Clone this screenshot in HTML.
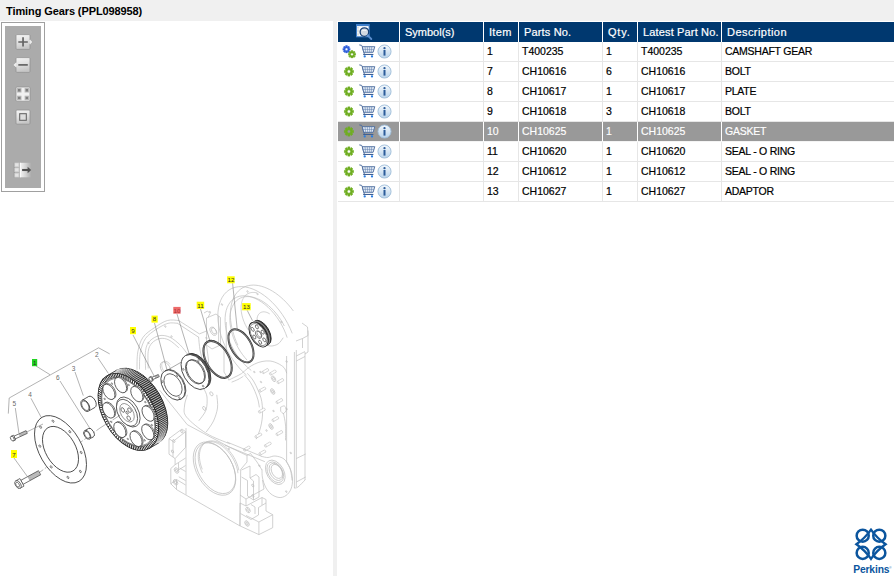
<!DOCTYPE html>
<html lang="en"><head><meta charset="utf-8"><title>Timing Gears (PPL098958)</title>
<style>
*{box-sizing:border-box}
html,body{margin:0;padding:0}
body{width:894px;height:576px;overflow:hidden;background:#f0f0f0;font-family:"Liberation Sans",sans-serif;position:relative;color:#000}
#title{position:absolute;left:6px;top:4px;height:14px;line-height:14px;font-size:11px;font-weight:bold;letter-spacing:-0.1px;white-space:nowrap;color:#000}
#left{position:absolute;left:0;top:21px;width:333px;height:555px;background:#fff;overflow:hidden}
#split{position:absolute;left:333px;top:21px;width:4px;height:555px;background:#f0f0f0}
#right{position:absolute;left:337px;top:21px;width:557px;height:555px;background:#fff;overflow:hidden}
#parts{position:absolute;left:1px;top:1px;width:556px;border-collapse:separate;border-spacing:0;table-layout:fixed;font-size:10.5px}
#parts th{background:#00386f;color:#fff;font-weight:normal;font-size:11px;text-align:left;height:20px;padding:0 0 1px 5px;border-right:1px solid #fff;white-space:nowrap;overflow:hidden}
#parts th:last-child{border-right:0}
#parts td{height:20px;padding:0 0 1px 3px;border-right:1px solid #e6e6e6;border-bottom:1px solid #e6e6e6;white-space:nowrap;overflow:hidden;color:#000;letter-spacing:0}
#parts td:last-child{border-right:0}
#parts .c0{width:62px}#parts .c1{width:84px}#parts .c2{width:35px}#parts .c3{width:84px}#parts .c4{width:35px}#parts .c5{width:84px}
#parts th.c0{padding:0;text-align:center}
#parts th.c0 svg{display:block;margin:1px 0 0 18px}
#parts td.c0{padding:0;position:relative}
#parts td.c6{letter-spacing:-0.25px}
#parts tr.sel td{background:#999;color:#fff;border-right-color:#fff;border-bottom-color:#f4f4f4}
.ic{position:absolute;top:2px}
.ic.g1{left:4px;top:2.500px}.ic.g2{left:3.900px;top:2.600px}
.ic.cart{left:20.500px;top:1.500px}
.ic.info{left:39.100px;top:1.500px}
#tb{position:absolute;left:1px;top:1px;width:44px;height:170px;border:1px solid #a0a0a0;background:#fff}
#tb .in{position:absolute;left:3px;top:3px;width:36px;height:162px;background:#ababab}
#tb svg{position:absolute;left:0;top:0}
#logo{position:absolute;left:513px;top:504px}
#diagram{position:absolute;left:0;top:0}

#parts th.c2{letter-spacing:0.3px}#parts th.c3{letter-spacing:0.15px}#parts th.c4{letter-spacing:0.8px}#parts th.c5{letter-spacing:0.15px}#parts th.c6{letter-spacing:0.45px}

#parts td{-webkit-text-stroke:0.2px #000}#parts tr.sel td{-webkit-text-stroke:0.15px #fff}#parts th{-webkit-text-stroke:0.2px #fff}

</style></head>
<body>
<svg width="0" height="0" style="position:absolute">
<defs>
<linearGradient id="ig" x1="0" y1="0" x2="0" y2="1"><stop offset="0" stop-color="#f4f9fd"/><stop offset="1" stop-color="#b9d3ea"/></linearGradient>
<symbol id="gear" viewBox="-10.500 -10.500 21 21">
<path fill="currentColor" stroke="currentColor" stroke-width="1.2" stroke-linejoin="round" fill-rule="evenodd" d="M6.69,-2.05 L9.35,-2.16 L9.35,2.16 L6.69,2.05 L6.18,3.29 L8.14,5.09 L5.09,8.14 L3.29,6.18 L2.05,6.69 L2.16,9.35 L-2.16,9.35 L-2.05,6.69 L-3.29,6.18 L-5.09,8.14 L-8.14,5.09 L-6.18,3.29 L-6.69,2.05 L-9.35,2.16 L-9.35,-2.16 L-6.69,-2.05 L-6.18,-3.29 L-8.14,-5.09 L-5.09,-8.14 L-3.29,-6.18 L-2.05,-6.69 L-2.16,-9.35 L2.16,-9.35 L2.05,-6.69 L3.29,-6.18 L5.09,-8.14 L8.14,-5.09 L6.18,-3.29 Z M0,-3.40 A3.40,3.40 0 1 0 0.01,-3.40 Z"/>
</symbol>
<symbol id="cart" viewBox="0 0 17 14">
<path d="M0.300,0.900 L2.300,1.300 Q3,1.500 3.200,2.300 L5.400,10.400 H13.600" fill="none" stroke="#4a6a9c" stroke-width="1"/>
<path d="M3.200,2.700 H15.800 L14.100,8.300 H4.800 Z" fill="#e4ecf6" stroke="#4a6a9c" stroke-width="0.900"/>
<path d="M6,2.700 L6.700,8.300 M8.300,2.700 L8.700,8.300 M10.600,2.700 L10.600,8.300 M12.700,2.700 L12.300,8.300 M4,5.400 H14.900" stroke="#5f7fae" stroke-width="0.550" fill="none"/>
<path d="M4.200,10.500 H14.400" fill="none" stroke="#3f5f92" stroke-width="1"/>
<circle cx="5.700" cy="12.400" r="1.150" fill="#2b7de0"/><circle cx="13" cy="12.400" r="1.150" fill="#2b7de0"/>
</symbol>
<symbol id="info" viewBox="0 0 15 15">
<circle cx="7.5" cy="7.5" r="6.55" fill="url(#ig)" stroke="#9dbcd8" stroke-width="0.9"/>
<circle cx="7.5" cy="4.2" r="1.15" fill="#2c5c9a"/>
<rect x="6.5" y="6" width="2" height="5.6" fill="#2c5c9a"/>
</symbol>
<symbol id="search" viewBox="0 0 17 17">
<rect x="0.500" y="0.500" width="12.600" height="12.300" fill="#fdfdfd" stroke="#3f7fca" stroke-width="1"/>
<rect x="0.200" y="0.100" width="13.200" height="2" fill="#3f7fca"/>
<path d="M2,3.200 V12" stroke="#9aa" stroke-width="1" stroke-dasharray="0.700 0.700"/>
<circle cx="8.400" cy="8.100" r="4.300" fill="#d3d9e1" stroke="#163f75" stroke-width="1.300"/>
<path d="M6.200,6.900 Q8.400,5.600 10.600,6.900" stroke="#f4f6f8" stroke-width="1.100" fill="none"/>
<path d="M11.700,11.400 L15.300,15" stroke="#5b8fd0" stroke-width="1.900" stroke-linecap="round"/>
</symbol>
</defs></svg>

<div id="title">Timing Gears (PPL098958)</div>
<div id="left">
<div id="tb"><div class="in"></div>
<svg width="42" height="168" viewBox="2 23 42 168">
<defs>
<linearGradient id="bg" x1="0" y1="0" x2="0.25" y2="1"><stop offset="0" stop-color="#f6f6f6"/><stop offset="0.5" stop-color="#e2e2e2"/><stop offset="1" stop-color="#c6c6c6"/></linearGradient>
<linearGradient id="fade" x1="0" y1="0" x2="1" y2="0"><stop offset="0" stop-color="#f4f4f4"/><stop offset="0.5" stop-color="#d4d4d4"/><stop offset="1" stop-color="#ababab"/></linearGradient>
</defs>
<path d="M17,34.600 H29 Q30,34.600 30,35.600 V39.600 L32.300,42 L30,44.400 V48.400 Q30,49.400 29,49.400 H17 Q16,49.400 16,48.400 V35.600 Q16,34.600 17,34.600 Z" fill="url(#bg)" stroke="#929292" stroke-width="0.800"/>
<path d="M30,39.600 L32.300,42 L30,44.400 Z" fill="#ececec"/>
<path d="M18.300,42 H27.800 M23.050,37.300 V46.600" stroke="#646464" stroke-width="1.700"/>
<path d="M17,57.600 H29 Q30,57.600 30,58.600 V71.400 Q30,72.400 29,72.400 H17 Q16,72.400 16,71.400 V67.300 L13.400,65 L16,62.600 V58.600 Q16,57.600 17,57.600 Z" fill="url(#bg)" stroke="#929292" stroke-width="0.800"/>
<path d="M16,62.600 L13.400,65 L16,67.300 Z" fill="#ececec"/>
<path d="M18.300,64.900 H27.800" stroke="#646464" stroke-width="1.700"/>
<rect x="16" y="87" width="14" height="14.200" rx="1" fill="#f1f1f1" stroke="#929292" stroke-width="0.800"/>
<g fill="#808080" stroke="#b9b9b9" stroke-width="1">
<rect x="17.500" y="88.500" width="3.500" height="3.500"/><rect x="25.100" y="88.500" width="3.500" height="3.500"/>
<rect x="17.500" y="96.200" width="3.500" height="3.500"/><rect x="25.100" y="96.200" width="3.500" height="3.500"/>
</g>
<rect x="16" y="110" width="14" height="14.200" rx="1" fill="url(#bg)" stroke="#929292" stroke-width="0.800"/>
<rect x="19.700" y="113.700" width="6.600" height="6.600" fill="#dedede" stroke="#626262" stroke-width="1.050"/>
<rect x="20" y="162.800" width="11.300" height="14.500" fill="url(#fade)"/>
<path d="M20.300,162.800 V177.300" stroke="#fff" stroke-width="0.800"/>
<path d="M14.300,162.800 V177.300" stroke="#8c8c8c" stroke-width="0.800"/>
<g fill="#e4e4e4" stroke="#cdcdcd" stroke-width="0.700">
<rect x="14.800" y="163" width="4.100" height="3.800"/><rect x="14.800" y="168" width="4.100" height="3.800"/><rect x="14.800" y="173.200" width="4.100" height="3.800"/>
</g>
<path d="M22.100,170 H28.500" stroke="#525252" stroke-width="2.100"/>
<path d="M27.600,166.700 L31.200,170 L27.600,173.300 Z" fill="#525252"/>
</svg></div>

<svg id="diagram" width="333" height="555" viewBox="0 21 333 555" font-family="Liberation Sans, sans-serif">
<polyline points="293.37,310.98 291.05,307.93 288.62,305.02 286.1,302.26 283.5,299.67 280.83,297.25 278.11,295.03 275.35,293.01 272.56,291.2 269.76,289.61 266.96,288.25 264.17,287.13 261.42,286.25 258.7,285.61 256.05,285.23 253.46,285.09 250.96,285.21 248.55,285.58 246.24,286.19 244.06,287.06 242.01,288.16 240.09,289.51 238.33,291.08 236.72,292.87 235.28,294.88 234.01,297.09 232.92,299.49 232.02,302.07 231.31,304.82 230.79,307.72 230.47,310.76 230.34,313.92 230.41,317.19 230.68,320.56 231.15,323.99 231.81,327.49 232.66,331.02 233.7,334.58 234.92,338.14 236.31,341.69 237.87,345.21" fill="none" stroke="#bdbdbd" stroke-width="0.7"/>
<polyline points="292.22,333.39 290.18,328.48 287.82,323.65 285.16,318.95 282.24,314.42 279.09,310.12 275.72,306.07 272.18,302.31 268.5,298.89 264.71,295.84 260.85,293.19 256.97,290.96 253.08,289.17 249.24,287.84 245.48,286.98 241.83,286.61 238.33,286.72 235.02,287.32 231.93,288.39 229.08,289.93 226.5,291.93 224.23,294.36 222.27,297.2 220.66,300.42 219.39,304 218.5,307.89 217.98,312.07 217.84,316.48 218.09,321.09 218.71,325.86 219.71,330.73 221.07,335.66 222.78,340.61 224.82,345.52 227.18,350.35 229.84,355.05 232.76,359.58 235.91,363.88 239.28,367.93 242.82,371.69 246.5,375.11" fill="none" stroke="#bdbdbd" stroke-width="0.7"/>
<polyline points="287.17,337.64 285.67,333.42 283.87,329.23 281.79,325.13 279.47,321.15 276.91,317.33 274.14,313.72 271.2,310.36 268.12,307.28 264.92,304.51 261.65,302.08 258.34,300.02 255.01,298.34 251.71,297.07 248.48,296.23 245.33,295.8 242.32,295.82 239.46,296.26 236.79,297.14 234.35,298.43 232.14,300.12 230.2,302.21 228.55,304.66 227.2,307.45 226.17,310.55 225.47,313.93 225.11,317.55 225.08,321.37 225.4,325.36 226.05,329.47 227.04,333.66 228.34,337.89 229.95,342.1 231.85,346.26 234.02,350.33 236.44,354.25 239.07,358 241.9,361.52 244.9,364.79 248.02,367.76 251.25,370.41" fill="none" stroke="#bdbdbd" stroke-width="0.7"/>
<polyline points="284.35,326.01 282.54,322.67 280.55,319.44 278.4,316.33 276.1,313.38 273.68,310.6 271.16,308.03 268.55,305.67 265.88,303.55 263.16,301.69 260.42,300.1 257.68,298.79 254.97,297.77 252.3,297.06 249.69,296.65 247.17,296.55 244.76,296.77 242.48,297.29 240.33,298.12 238.35,299.25 236.55,300.67 234.94,302.37 233.53,304.33 232.34,306.54 231.37,308.99 230.64,311.64 230.14,314.49 229.89,317.5 229.88,320.66 230.12,323.94 230.6,327.31 231.32,330.74 232.27,334.21 233.45,337.7 234.84,341.16 236.44,344.58 238.23,347.93 240.2,351.18 242.33,354.3 244.61,357.27 247.02,360.07" fill="none" stroke="#bdbdbd" stroke-width="0.7"/>
<polyline points="256.98,292.9 255.88,292.66 254.8,292.51 253.74,292.43 252.7,292.43 251.7,292.51 250.72,292.67 249.78,292.91 248.87,293.22 248,293.61 247.17,294.08 246.39,294.62 245.66,295.24 244.97,295.92 244.33,296.67 243.75,297.49 243.22,298.38 242.75,299.32 242.33,300.32 241.97,301.38 241.67,302.49 241.44,303.65 241.26,304.86 241.14,306.11 241.09,307.39 241.1,308.71 241.17,310.07 241.31,311.44 241.5,312.84 241.76,314.26 242.07,315.69 242.45,317.14 242.88,318.59 243.37,320.03 243.92,321.48 244.52,322.92 245.17,324.35 245.87,325.76 246.62,327.15 247.41,328.52 248.25,329.86" fill="none" stroke="#bdbdbd" stroke-width="0.7"/>
<polyline points="269.73,313.92 268.87,313.39 268.02,312.94 267.16,312.56 266.32,312.26 265.49,312.04 264.67,311.9 263.87,311.84 263.1,311.86 262.36,311.96 261.65,312.14 260.98,312.39 260.36,312.73 259.77,313.14 259.24,313.63 258.75,314.18 258.32,314.81 257.95,315.49 257.63,316.24 257.37,317.05 257.18,317.9 257.04,318.81 256.97,319.75 256.97,320.74 257.02,321.75 257.14,322.79 257.32,323.85 257.57,324.93 257.87,326.02 258.23,327.1 258.65,328.19 259.12,329.26 259.65,330.32 260.22,331.36 260.84,332.37 261.5,333.35 262.2,334.29 262.93,335.19 263.7,336.04 264.49,336.84 265.3,337.59" fill="none" stroke="#bdbdbd" stroke-width="0.7"/>
<path d="M262.0,342.5 C263.3,343.1 267.3,345.8 270.0,346.0 C272.7,346.2 275.8,345.3 278.0,344.0 C280.2,342.7 282.2,339.0 283.0,338.0" fill="none" stroke="#bdbdbd" stroke-width="0.7" stroke-linejoin="round" stroke-linecap="round" />
<ellipse cx="222" cy="304.5" rx="0.9" ry="0.54" transform="rotate(60 222 304.5)" fill="none" stroke="#bdbdbd" stroke-width="0.7" />
<ellipse cx="247.5" cy="291.5" rx="0.9" ry="0.54" transform="rotate(60 247.5 291.5)" fill="none" stroke="#bdbdbd" stroke-width="0.7" />
<ellipse cx="257.5" cy="294" rx="0.9" ry="0.54" transform="rotate(60 257.5 294)" fill="none" stroke="#bdbdbd" stroke-width="0.7" />
<ellipse cx="281.5" cy="322" rx="0.9" ry="0.54" transform="rotate(60 281.5 322)" fill="none" stroke="#bdbdbd" stroke-width="0.7" />
<ellipse cx="286.6" cy="361.5" rx="0.9" ry="0.54" transform="rotate(60 286.6 361.5)" fill="none" stroke="#bdbdbd" stroke-width="0.7" />
<ellipse cx="286.6" cy="409" rx="0.9" ry="0.54" transform="rotate(60 286.6 409)" fill="none" stroke="#bdbdbd" stroke-width="0.7" />
<ellipse cx="290.8" cy="453" rx="0.9" ry="0.54" transform="rotate(60 290.8 453)" fill="none" stroke="#bdbdbd" stroke-width="0.7" />
<polyline points="218.6,316 218.6,345.5" fill="none" stroke="#bdbdbd" stroke-width="0.7" stroke-linejoin="round" />
<polyline points="226.3,322 226.3,351" fill="none" stroke="#bdbdbd" stroke-width="0.7" stroke-linejoin="round" />
<polyline points="286.6,356 286.6,462" fill="none" stroke="#bdbdbd" stroke-width="0.7" stroke-linejoin="round" />
<polyline points="294.4,352 294.4,488" fill="none" stroke="#bdbdbd" stroke-width="0.7" stroke-linejoin="round" />
<polyline points="296.3,350 296.3,487" fill="none" stroke="#bdbdbd" stroke-width="0.7" stroke-linejoin="round" />
<polyline points="305,352 305,480" fill="none" stroke="#bdbdbd" stroke-width="0.7" stroke-linejoin="round" />
<polyline points="308,330.5 308,352 305,354" fill="none" stroke="#bdbdbd" stroke-width="0.7" stroke-linejoin="round" />
<polyline points="296.3,356 305,351.5" fill="none" stroke="#bdbdbd" stroke-width="0.7" stroke-linejoin="round" />
<polyline points="296.3,361 305,356.5" fill="none" stroke="#bdbdbd" stroke-width="0.7" stroke-linejoin="round" />
<path d="M294.4,488.0 C295.0,487.8 296.2,488.3 298.0,487.0 C299.8,485.7 303.8,481.2 305.0,480.0" fill="none" stroke="#bdbdbd" stroke-width="0.7" stroke-linejoin="round" stroke-linecap="round" />
<polyline points="296.3,458.5 305.7,454" fill="none" stroke="#bdbdbd" stroke-width="0.7" stroke-linejoin="round" />
<polyline points="296.3,482 305.7,477" fill="none" stroke="#bdbdbd" stroke-width="0.7" stroke-linejoin="round" />
<polyline points="302,323 307.5,327 308,335.5 302.5,338.5" fill="none" stroke="#bdbdbd" stroke-width="0.7" stroke-linejoin="round" />
<polyline points="296,341 302.5,338.5 302.5,348" fill="none" stroke="#bdbdbd" stroke-width="0.7" stroke-linejoin="round" />
<polygon points="206.5,318 216,314 220.5,317.5 220.5,345 212,349 206.5,345" fill="none" stroke="#bdbdbd" stroke-width="0.7" stroke-linejoin="round" />
<ellipse cx="213.3" cy="331.2" rx="4.6" ry="2.76" transform="rotate(60 213.3 331.2)" fill="none" stroke="#bdbdbd" stroke-width="0.7" />
<ellipse cx="213.9" cy="330.8" rx="3.4" ry="2.04" transform="rotate(60 213.9 330.8)" fill="none" stroke="#bdbdbd" stroke-width="0.7" />
<polyline points="204,313 207.5,311 210,313.5 208,317.5" fill="none" stroke="#bdbdbd" stroke-width="0.7" stroke-linejoin="round" />
<ellipse cx="206.4" cy="338" rx="0.9" ry="0.54" transform="rotate(60 206.4 338)" fill="none" stroke="#bdbdbd" stroke-width="0.7" />
<ellipse cx="210" cy="312" rx="0.8" ry="0.48" transform="rotate(60 210 312)" fill="none" stroke="#bdbdbd" stroke-width="0.7" />
<path d="M137.0,369.4 C137.1,366.5 136.8,357.4 137.8,352.0 C138.8,346.6 140.2,341.3 143.0,337.3 C145.8,333.3 150.2,330.6 154.3,327.8 C158.4,325.0 163.2,321.7 167.3,320.5 C171.4,319.3 176.7,320.5 178.6,320.5" fill="none" stroke="#bdbdbd" stroke-width="0.7" stroke-linejoin="round" stroke-linecap="round" />
<polyline points="178.6,320.5 187.3,326 199.4,333.9 206.5,331" fill="none" stroke="#bdbdbd" stroke-width="0.7" stroke-linejoin="round" />
<path d="M139.5,369.0 C139.6,366.2 139.3,357.6 140.3,352.5 C141.3,347.4 142.9,342.3 145.5,338.5 C148.1,334.7 152.2,332.0 156.0,329.5 C159.8,327.0 164.4,324.3 168.0,323.3 C171.6,322.3 175.9,323.3 177.5,323.3" fill="none" stroke="#bdbdbd" stroke-width="0.7" stroke-linejoin="round" stroke-linecap="round" />
<polyline points="177.5,323.3 198.6,337.2" fill="none" stroke="#bdbdbd" stroke-width="0.7" stroke-linejoin="round" />
<path d="M145.6,369.4 C145.6,366.2 144.9,355.1 145.6,350.3 C146.3,345.5 147.7,343.2 150.0,340.8 C152.3,338.4 156.2,336.2 159.5,335.6 C162.8,335.0 166.5,335.7 170.0,337.3 C173.5,338.9 177.4,342.4 180.3,345.1 C183.2,347.9 186.1,352.4 187.3,353.8" fill="none" stroke="#bdbdbd" stroke-width="0.7" stroke-linejoin="round" stroke-linecap="round" />
<path d="M148.2,368.0 C148.2,365.2 147.6,355.7 148.2,351.5 C148.8,347.3 150.0,345.2 152.0,343.0 C154.0,340.8 157.2,339.0 160.0,338.5 C162.8,338.0 165.9,338.5 169.0,340.0 C172.1,341.5 176.9,346.2 178.5,347.5" fill="none" stroke="#bdbdbd" stroke-width="0.7" stroke-linejoin="round" stroke-linecap="round" />
<ellipse cx="148.5" cy="343" rx="0.9" ry="0.54" transform="rotate(60 148.5 343)" fill="none" stroke="#bdbdbd" stroke-width="0.7" />
<ellipse cx="165.3" cy="326.5" rx="0.9" ry="0.54" transform="rotate(60 165.3 326.5)" fill="none" stroke="#bdbdbd" stroke-width="0.7" />
<ellipse cx="171.5" cy="336.5" rx="0.9" ry="0.54" transform="rotate(60 171.5 336.5)" fill="none" stroke="#bdbdbd" stroke-width="0.7" />
<ellipse cx="165.5" cy="368.5" rx="7.2" ry="4.46" transform="rotate(60 165.5 368.5)" fill="none" stroke="#bdbdbd" stroke-width="0.7" />
<polyline points="170.18,364.52 169.82,364.05 169.44,363.61 169.05,363.2 168.64,362.82 168.21,362.48 167.78,362.17 167.35,361.9 166.91,361.67 166.47,361.49 166.04,361.34 165.61,361.24 165.2,361.19 164.79,361.18 164.4,361.22 164.03,361.3 163.68,361.42 163.35,361.59 163.05,361.81 162.77,362.06 162.52,362.35 162.31,362.69 162.12,363.05 161.97,363.45 161.85,363.88 161.77,364.33 161.73,364.81 161.72,365.31 161.75,365.83 161.81,366.36 161.91,366.9 162.04,367.45 162.21,368 162.41,368.54 162.64,369.09 162.91,369.62 163.2,370.14 163.51,370.65 163.85,371.13 164.22,371.59 164.6,372.03" fill="none" stroke="#bdbdbd" stroke-width="0.7"/>
<polyline points="159.5,390 187.3,424.7 229.8,447.3" fill="none" stroke="#bdbdbd" stroke-width="0.7" stroke-linejoin="round" />
<path d="M187.3,395.2 C186.8,397.0 184.6,402.4 184.5,406.0 C184.4,409.6 182.8,412.4 186.5,417.0 C190.2,421.6 199.2,428.9 206.4,433.4 C213.6,437.9 225.9,442.1 229.8,443.8" fill="none" stroke="#bdbdbd" stroke-width="0.7" stroke-linejoin="round" stroke-linecap="round" />
<path d="M216.8,395.2 C216.9,397.3 218.1,403.7 217.5,408.0 C216.9,412.3 215.3,417.1 213.5,421.0 C211.7,424.9 207.6,429.9 206.4,431.7" fill="none" stroke="#bdbdbd" stroke-width="0.7" stroke-linejoin="round" stroke-linecap="round" />
<path d="M204.0,389.0 C204.5,390.3 206.7,393.5 207.0,397.0 C207.3,400.5 207.3,406.1 206.0,410.0 C204.7,413.9 200.2,418.8 199.0,420.5" fill="none" stroke="#bdbdbd" stroke-width="0.7" stroke-linejoin="round" stroke-linecap="round" />
<ellipse cx="211.4" cy="393.8" rx="2.2" ry="1.36" transform="rotate(60 211.4 393.8)" fill="none" stroke="#bdbdbd" stroke-width="0.7" />
<ellipse cx="204.2" cy="408.4" rx="2.1" ry="1.3" transform="rotate(60 204.2 408.4)" fill="none" stroke="#bdbdbd" stroke-width="0.7" />
<path d="M198.6,337.2 C198.8,339.3 199.3,345.5 200.0,350.0 C200.7,354.5 202.5,359.3 203.0,364.0 C203.5,368.7 203.3,373.7 203.0,378.0 C202.7,382.3 201.3,388.0 201.0,390.0" fill="none" stroke="#bdbdbd" stroke-width="0.7" stroke-linejoin="round" stroke-linecap="round" />
<polyline points="206.5,345 208.5,360 208.5,377" fill="none" stroke="#bdbdbd" stroke-width="0.7" stroke-linejoin="round" />
<polyline points="220.5,345 224,349 224,372 229,380" fill="none" stroke="#bdbdbd" stroke-width="0.7" stroke-linejoin="round" />
<path d="M229.0,380.0 C230.0,379.5 232.9,378.1 235.0,377.0 C237.1,375.9 239.3,375.1 241.5,373.6 C243.7,372.1 245.8,369.6 248.0,368.0 C250.2,366.4 252.2,365.2 254.5,364.1 C256.8,363.0 259.4,362.0 262.0,361.5 C264.6,361.0 267.4,360.7 270.1,361.0 C272.8,361.3 275.7,362.4 278.0,363.5 C280.3,364.6 282.6,366.1 284.0,367.6 C285.4,369.2 286.2,371.9 286.6,372.8" fill="none" stroke="#bdbdbd" stroke-width="0.7" stroke-linejoin="round" stroke-linecap="round" />
<path d="M232.0,382.0 C233.0,381.6 236.2,380.4 238.0,379.5 C239.8,378.6 242.2,377.0 243.0,376.5" fill="none" stroke="#bdbdbd" stroke-width="0.7" stroke-linejoin="round" stroke-linecap="round" />
<path d="M247.6,373.6 C248.6,374.8 251.8,378.2 253.5,381.0 C255.2,383.8 256.8,387.3 258.0,390.1 C259.2,392.9 260.3,395.4 261.0,398.0 C261.7,400.6 262.1,403.0 262.3,405.8 C262.6,408.6 262.6,412.1 262.5,415.0 C262.4,417.9 262.0,420.4 261.5,423.1 C261.0,425.8 260.4,428.4 259.5,431.0 C258.6,433.6 256.8,437.5 256.3,438.8" fill="none" stroke="#bdbdbd" stroke-width="0.7" stroke-linejoin="round" stroke-linecap="round" />
<path d="M244.5,375.0 C245.5,376.2 248.8,379.8 250.5,382.5 C252.2,385.2 253.8,388.6 255.0,391.5 C256.2,394.4 257.3,397.4 258.0,400.0 C258.7,402.6 259.1,405.8 259.3,407.0" fill="none" stroke="#bdbdbd" stroke-width="0.7" stroke-linejoin="round" stroke-linecap="round" />
<ellipse cx="267.75" cy="369.7" rx="1.25" ry="0.75" transform="rotate(60 267.75 369.7)" fill="#fff" stroke="#bdbdbd" stroke-width="0.6" />
<polygon points="263.52,373.58 262.27,371.42 267.12,368.62 268.37,370.78" fill="#fff" stroke="none" stroke-width="0.7" stroke-linejoin="round" />
<line x1="263.52" y1="373.58" x2="268.37" y2="370.78" stroke="#bdbdbd" stroke-width="0.6" />
<line x1="262.27" y1="371.42" x2="267.12" y2="368.62" stroke="#bdbdbd" stroke-width="0.6" />
<ellipse cx="262.9" cy="372.5" rx="1.25" ry="0.75" transform="rotate(60 262.9 372.5)" fill="#fff" stroke="#bdbdbd" stroke-width="0.6" />
<ellipse cx="275.25" cy="371.2" rx="1.25" ry="0.75" transform="rotate(60 275.25 371.2)" fill="#fff" stroke="#bdbdbd" stroke-width="0.6" />
<polygon points="271.02,375.08 269.77,372.92 274.62,370.12 275.87,372.28" fill="#fff" stroke="none" stroke-width="0.7" stroke-linejoin="round" />
<line x1="271.02" y1="375.08" x2="275.87" y2="372.28" stroke="#bdbdbd" stroke-width="0.6" />
<line x1="269.77" y1="372.92" x2="274.62" y2="370.12" stroke="#bdbdbd" stroke-width="0.6" />
<ellipse cx="270.4" cy="374" rx="1.25" ry="0.75" transform="rotate(60 270.4 374)" fill="#fff" stroke="#bdbdbd" stroke-width="0.6" />
<ellipse cx="282.75" cy="379.7" rx="1.25" ry="0.75" transform="rotate(60 282.75 379.7)" fill="#fff" stroke="#bdbdbd" stroke-width="0.6" />
<polygon points="278.52,383.58 277.27,381.42 282.12,378.62 283.37,380.78" fill="#fff" stroke="none" stroke-width="0.7" stroke-linejoin="round" />
<line x1="278.52" y1="383.58" x2="283.37" y2="380.78" stroke="#bdbdbd" stroke-width="0.6" />
<line x1="277.27" y1="381.42" x2="282.12" y2="378.62" stroke="#bdbdbd" stroke-width="0.6" />
<ellipse cx="277.9" cy="382.5" rx="1.25" ry="0.75" transform="rotate(60 277.9 382.5)" fill="#fff" stroke="#bdbdbd" stroke-width="0.6" />
<ellipse cx="264.75" cy="388.2" rx="1.25" ry="0.75" transform="rotate(60 264.75 388.2)" fill="#fff" stroke="#bdbdbd" stroke-width="0.6" />
<polygon points="260.52,392.08 259.27,389.92 264.12,387.12 265.37,389.28" fill="#fff" stroke="none" stroke-width="0.7" stroke-linejoin="round" />
<line x1="260.52" y1="392.08" x2="265.37" y2="389.28" stroke="#bdbdbd" stroke-width="0.6" />
<line x1="259.27" y1="389.92" x2="264.12" y2="387.12" stroke="#bdbdbd" stroke-width="0.6" />
<ellipse cx="259.9" cy="391" rx="1.25" ry="0.75" transform="rotate(60 259.9 391)" fill="#fff" stroke="#bdbdbd" stroke-width="0.6" />
<ellipse cx="281.75" cy="399.7" rx="1.25" ry="0.75" transform="rotate(60 281.75 399.7)" fill="#fff" stroke="#bdbdbd" stroke-width="0.6" />
<polygon points="277.52,403.58 276.27,401.42 281.12,398.62 282.37,400.78" fill="#fff" stroke="none" stroke-width="0.7" stroke-linejoin="round" />
<line x1="277.52" y1="403.58" x2="282.37" y2="400.78" stroke="#bdbdbd" stroke-width="0.6" />
<line x1="276.27" y1="401.42" x2="281.12" y2="398.62" stroke="#bdbdbd" stroke-width="0.6" />
<ellipse cx="276.9" cy="402.5" rx="1.25" ry="0.75" transform="rotate(60 276.9 402.5)" fill="#fff" stroke="#bdbdbd" stroke-width="0.6" />
<ellipse cx="264.25" cy="409.2" rx="1.25" ry="0.75" transform="rotate(60 264.25 409.2)" fill="#fff" stroke="#bdbdbd" stroke-width="0.6" />
<polygon points="260.02,413.08 258.77,410.92 263.62,408.12 264.87,410.28" fill="#fff" stroke="none" stroke-width="0.7" stroke-linejoin="round" />
<line x1="260.02" y1="413.08" x2="264.87" y2="410.28" stroke="#bdbdbd" stroke-width="0.6" />
<line x1="258.77" y1="410.92" x2="263.62" y2="408.12" stroke="#bdbdbd" stroke-width="0.6" />
<ellipse cx="259.4" cy="412" rx="1.25" ry="0.75" transform="rotate(60 259.4 412)" fill="#fff" stroke="#bdbdbd" stroke-width="0.6" />
<ellipse cx="277.75" cy="417.7" rx="1.25" ry="0.75" transform="rotate(60 277.75 417.7)" fill="#fff" stroke="#bdbdbd" stroke-width="0.6" />
<polygon points="273.52,421.58 272.27,419.42 277.12,416.62 278.37,418.78" fill="#fff" stroke="none" stroke-width="0.7" stroke-linejoin="round" />
<line x1="273.52" y1="421.58" x2="278.37" y2="418.78" stroke="#bdbdbd" stroke-width="0.6" />
<line x1="272.27" y1="419.42" x2="277.12" y2="416.62" stroke="#bdbdbd" stroke-width="0.6" />
<ellipse cx="272.9" cy="420.5" rx="1.25" ry="0.75" transform="rotate(60 272.9 420.5)" fill="#fff" stroke="#bdbdbd" stroke-width="0.6" />
<ellipse cx="281.75" cy="431.7" rx="1.25" ry="0.75" transform="rotate(60 281.75 431.7)" fill="#fff" stroke="#bdbdbd" stroke-width="0.6" />
<polygon points="277.52,435.58 276.27,433.42 281.12,430.62 282.37,432.78" fill="#fff" stroke="none" stroke-width="0.7" stroke-linejoin="round" />
<line x1="277.52" y1="435.58" x2="282.37" y2="432.78" stroke="#bdbdbd" stroke-width="0.6" />
<line x1="276.27" y1="433.42" x2="281.12" y2="430.62" stroke="#bdbdbd" stroke-width="0.6" />
<ellipse cx="276.9" cy="434.5" rx="1.25" ry="0.75" transform="rotate(60 276.9 434.5)" fill="#fff" stroke="#bdbdbd" stroke-width="0.6" />
<ellipse cx="260.75" cy="434.2" rx="1.25" ry="0.75" transform="rotate(60 260.75 434.2)" fill="#fff" stroke="#bdbdbd" stroke-width="0.6" />
<polygon points="256.52,438.08 255.28,435.92 260.12,433.12 261.37,435.28" fill="#fff" stroke="none" stroke-width="0.7" stroke-linejoin="round" />
<line x1="256.52" y1="438.08" x2="261.37" y2="435.28" stroke="#bdbdbd" stroke-width="0.6" />
<line x1="255.28" y1="435.92" x2="260.12" y2="433.12" stroke="#bdbdbd" stroke-width="0.6" />
<ellipse cx="255.9" cy="437" rx="1.25" ry="0.75" transform="rotate(60 255.9 437)" fill="#fff" stroke="#bdbdbd" stroke-width="0.6" />
<ellipse cx="249.25" cy="447.2" rx="1.25" ry="0.75" transform="rotate(60 249.25 447.2)" fill="#fff" stroke="#bdbdbd" stroke-width="0.6" />
<polygon points="245.03,451.08 243.78,448.92 248.62,446.12 249.87,448.28" fill="#fff" stroke="none" stroke-width="0.7" stroke-linejoin="round" />
<line x1="245.03" y1="451.08" x2="249.87" y2="448.28" stroke="#bdbdbd" stroke-width="0.6" />
<line x1="243.78" y1="448.92" x2="248.62" y2="446.12" stroke="#bdbdbd" stroke-width="0.6" />
<ellipse cx="244.4" cy="450" rx="1.25" ry="0.75" transform="rotate(60 244.4 450)" fill="#fff" stroke="#bdbdbd" stroke-width="0.6" />
<ellipse cx="270.25" cy="443.2" rx="1.25" ry="0.75" transform="rotate(60 270.25 443.2)" fill="#fff" stroke="#bdbdbd" stroke-width="0.6" />
<polygon points="266.02,447.08 264.77,444.92 269.62,442.12 270.87,444.28" fill="#fff" stroke="none" stroke-width="0.7" stroke-linejoin="round" />
<line x1="266.02" y1="447.08" x2="270.87" y2="444.28" stroke="#bdbdbd" stroke-width="0.6" />
<line x1="264.77" y1="444.92" x2="269.62" y2="442.12" stroke="#bdbdbd" stroke-width="0.6" />
<ellipse cx="265.4" cy="446" rx="1.25" ry="0.75" transform="rotate(60 265.4 446)" fill="#fff" stroke="#bdbdbd" stroke-width="0.6" />
<ellipse cx="264.75" cy="451.2" rx="1.25" ry="0.75" transform="rotate(60 264.75 451.2)" fill="#fff" stroke="#bdbdbd" stroke-width="0.6" />
<polygon points="260.52,455.08 259.27,452.92 264.12,450.12 265.37,452.28" fill="#fff" stroke="none" stroke-width="0.7" stroke-linejoin="round" />
<line x1="260.52" y1="455.08" x2="265.37" y2="452.28" stroke="#bdbdbd" stroke-width="0.6" />
<line x1="259.27" y1="452.92" x2="264.12" y2="450.12" stroke="#bdbdbd" stroke-width="0.6" />
<ellipse cx="259.9" cy="454" rx="1.25" ry="0.75" transform="rotate(60 259.9 454)" fill="#fff" stroke="#bdbdbd" stroke-width="0.6" />
<ellipse cx="273.6" cy="378.8" rx="3.1" ry="1.71" transform="rotate(60 273.6 378.8)" fill="none" stroke="#bdbdbd" stroke-width="0.7" />
<ellipse cx="273.6" cy="378.8" rx="1.5" ry="0.83" transform="rotate(60 273.6 378.8)" fill="none" stroke="#bdbdbd" stroke-width="0.7" />
<ellipse cx="272.7" cy="391.5" rx="3.1" ry="1.71" transform="rotate(60 272.7 391.5)" fill="none" stroke="#bdbdbd" stroke-width="0.7" />
<ellipse cx="272.7" cy="391.5" rx="1.5" ry="0.83" transform="rotate(60 272.7 391.5)" fill="none" stroke="#bdbdbd" stroke-width="0.7" />
<ellipse cx="271" cy="426.5" rx="3.1" ry="1.71" transform="rotate(60 271 426.5)" fill="none" stroke="#bdbdbd" stroke-width="0.7" />
<ellipse cx="271" cy="426.5" rx="1.5" ry="0.83" transform="rotate(60 271 426.5)" fill="none" stroke="#bdbdbd" stroke-width="0.7" />
<ellipse cx="254.3" cy="372" rx="0.9" ry="0.54" transform="rotate(60 254.3 372)" fill="none" stroke="#bdbdbd" stroke-width="0.7" />
<ellipse cx="260.5" cy="372" rx="0.9" ry="0.54" transform="rotate(60 260.5 372)" fill="none" stroke="#bdbdbd" stroke-width="0.7" />
<ellipse cx="261" cy="382" rx="0.9" ry="0.54" transform="rotate(60 261 382)" fill="none" stroke="#bdbdbd" stroke-width="0.7" />
<ellipse cx="273.5" cy="411" rx="0.9" ry="0.54" transform="rotate(60 273.5 411)" fill="none" stroke="#bdbdbd" stroke-width="0.7" />
<ellipse cx="266.5" cy="430.5" rx="0.9" ry="0.54" transform="rotate(60 266.5 430.5)" fill="none" stroke="#bdbdbd" stroke-width="0.7" />
<path d="M281.0,407.0 C281.6,406.8 283.6,405.5 284.5,406.0 C285.4,406.5 286.5,408.8 286.3,410.0 C286.1,411.2 284.4,413.2 283.5,413.5 C282.6,413.8 281.4,411.8 281.0,411.5 Z" fill="none" stroke="#bdbdbd" stroke-width="0.7" stroke-linejoin="round" stroke-linecap="round" />
<path d="M283.5,413.5 C283.8,415.4 285.2,420.6 285.5,425.0 C285.8,429.4 285.5,437.5 285.5,440.0" fill="none" stroke="#bdbdbd" stroke-width="0.7" stroke-linejoin="round" stroke-linecap="round" />
<polygon points="169,438.6 182,429 185.6,431.7 185.6,447.3 175.1,458.6 169,454.2" fill="none" stroke="#bdbdbd" stroke-width="0.7" stroke-linejoin="round" />
<polyline points="169,438.6 173,441.5 173,457" fill="none" stroke="#bdbdbd" stroke-width="0.7" stroke-linejoin="round" />
<polyline points="173,441.5 185.6,431.7" fill="none" stroke="#bdbdbd" stroke-width="0.7" stroke-linejoin="round" />
<ellipse cx="173.8" cy="441" rx="1.6" ry="0.96" transform="rotate(60 173.8 441)" fill="none" stroke="#bdbdbd" stroke-width="0.7" />
<ellipse cx="172.5" cy="451.5" rx="1.6" ry="0.96" transform="rotate(60 172.5 451.5)" fill="none" stroke="#bdbdbd" stroke-width="0.7" />
<ellipse cx="181.8" cy="431.5" rx="1.6" ry="0.96" transform="rotate(60 181.8 431.5)" fill="none" stroke="#bdbdbd" stroke-width="0.7" />
<polyline points="175.1,458.6 175.1,464.7 170.8,468.5 170.8,483.8 176.9,489.8 185.4,494.7" fill="none" stroke="#bdbdbd" stroke-width="0.7" stroke-linejoin="round" />
<polyline points="175.1,464.7 185.6,458" fill="none" stroke="#bdbdbd" stroke-width="0.7" stroke-linejoin="round" />
<polyline points="178.5,463 178.5,470 185.6,465.5" fill="none" stroke="#bdbdbd" stroke-width="0.7" stroke-linejoin="round" />
<polyline points="170.8,483.8 176.5,479.5 185.6,485" fill="none" stroke="#bdbdbd" stroke-width="0.7" stroke-linejoin="round" />
<polyline points="176.5,479.5 176.5,489.5" fill="none" stroke="#bdbdbd" stroke-width="0.7" stroke-linejoin="round" />
<ellipse cx="176.5" cy="470.5" rx="3" ry="1.86" transform="rotate(60 176.5 470.5)" fill="none" stroke="#bdbdbd" stroke-width="0.7" />
<ellipse cx="176.5" cy="470.5" rx="1.5" ry="0.93" transform="rotate(60 176.5 470.5)" fill="none" stroke="#bdbdbd" stroke-width="0.7" />
<ellipse cx="175.5" cy="482.3" rx="3" ry="1.86" transform="rotate(60 175.5 482.3)" fill="none" stroke="#bdbdbd" stroke-width="0.7" />
<ellipse cx="175.5" cy="482.3" rx="1.5" ry="0.93" transform="rotate(60 175.5 482.3)" fill="none" stroke="#bdbdbd" stroke-width="0.7" />
<polyline points="179.5,468 185.6,471.5" fill="none" stroke="#bdbdbd" stroke-width="0.7" stroke-linejoin="round" />
<polyline points="178.8,476.8 185.6,480.7" fill="none" stroke="#bdbdbd" stroke-width="0.7" stroke-linejoin="round" />
<polyline points="186,428 186,494.7" fill="none" stroke="#bdbdbd" stroke-width="0.7" stroke-linejoin="round" />
<polyline points="185.4,494.7 239.9,525.9" fill="none" stroke="#bdbdbd" stroke-width="0.7" stroke-linejoin="round" />
<polyline points="240.7,469.5 239.9,525.9" fill="none" stroke="#bdbdbd" stroke-width="0.7" stroke-linejoin="round" />
<ellipse cx="214.5" cy="468.6" rx="29" ry="17.98" transform="rotate(60 214.5 468.6)" fill="none" stroke="#bdbdbd" stroke-width="0.7" />
<ellipse cx="215.3" cy="468.2" rx="27.6" ry="17.11" transform="rotate(60 215.3 468.2)" fill="none" stroke="#bdbdbd" stroke-width="0.7" />
<polyline points="237.96,473.2 237.63,470.97 237.13,468.7 236.47,466.41 235.66,464.12 234.7,461.85 233.61,459.62 232.38,457.45 231.04,455.36 229.59,453.36 228.04,451.47 226.41,449.71 224.71,448.1 222.96,446.63 221.16,445.34 219.35,444.22 217.52,443.29 215.7,442.56 213.89,442.02 212.13,441.7 210.42,441.58 208.77,441.67 207.2,441.98 205.72,442.48 204.35,443.19 203.09,444.1 201.96,445.2 200.97,446.47 200.12,447.92 199.42,449.52 198.88,451.26 198.51,453.14 198.29,455.12 198.25,457.21 198.37,459.37 198.66,461.59 199.11,463.85 199.72,466.14 200.49,468.43 201.41,470.71 202.47,472.95" fill="none" stroke="#bdbdbd" stroke-width="0.7"/>
<polyline points="238.85,470.38 238.39,468.23 237.79,466.08 237.05,463.92 236.18,461.77 235.19,459.66 234.08,457.59 232.85,455.59 231.53,453.66 230.12,451.82 228.63,450.09 227.07,448.47 225.45,446.99 223.78,445.65 222.09,444.46 220.37,443.42 218.65,442.56 216.93,441.87 215.23,441.36 213.56,441.03 211.94,440.89 210.37,440.93 208.87,441.16 207.44,441.58 206.11,442.17 204.87,442.95 203.75,443.89 202.74,445 201.85,446.26 201.1,447.68 200.48,449.22 200,450.89 199.67,452.68 199.49,454.56 199.45,456.53 199.56,458.56 199.82,460.65 200.23,462.78 200.78,464.94 201.46,467.1 202.29,469.25" fill="none" stroke="#bdbdbd" stroke-width="0.7"/>
<polyline points="225,445.2 264.9,461.7" fill="none" stroke="#bdbdbd" stroke-width="0.7" stroke-linejoin="round" />
<polyline points="227,442 262,456.5" fill="none" stroke="#bdbdbd" stroke-width="0.7" stroke-linejoin="round" />
<polyline points="229.8,447.3 247,455.5 247,462 240.7,469.5" fill="none" stroke="#bdbdbd" stroke-width="0.7" stroke-linejoin="round" />
<polyline points="247,455.5 250.5,453.5 257,462 262,470" fill="none" stroke="#bdbdbd" stroke-width="0.7" stroke-linejoin="round" />
<ellipse cx="228.8" cy="448.8" rx="0.9" ry="0.54" transform="rotate(60 228.8 448.8)" fill="none" stroke="#bdbdbd" stroke-width="0.7" />
<ellipse cx="259.4" cy="465.8" rx="0.9" ry="0.54" transform="rotate(60 259.4 465.8)" fill="none" stroke="#bdbdbd" stroke-width="0.7" />
<ellipse cx="286.3" cy="491.6" rx="0.9" ry="0.54" transform="rotate(60 286.3 491.6)" fill="none" stroke="#bdbdbd" stroke-width="0.7" />
<path d="M262.0,456.5 C263.0,456.7 265.8,457.6 268.0,457.5 C270.2,457.4 272.3,455.8 275.0,456.0 C277.7,456.2 281.5,457.0 284.0,459.0 C286.5,461.0 288.6,464.7 290.0,468.0 C291.4,471.3 292.3,475.5 292.5,479.0 C292.7,482.5 292.1,486.2 291.0,489.0 C289.9,491.8 288.0,494.1 286.0,495.5 C284.0,496.9 281.5,497.8 279.0,497.5 C276.5,497.2 273.2,495.8 271.0,494.0 C268.8,492.2 266.9,489.7 265.5,487.0 C264.1,484.3 263.1,480.8 262.5,478.0 C261.9,475.2 262.1,471.3 262.0,470.0" fill="none" stroke="#bdbdbd" stroke-width="0.7" stroke-linejoin="round" stroke-linecap="round" />
<ellipse cx="275.3" cy="472.3" rx="13.2" ry="8.45" transform="rotate(60 275.3 472.3)" fill="none" stroke="#bdbdbd" stroke-width="0.7" />
<ellipse cx="275.3" cy="472.3" rx="11.2" ry="7.17" transform="rotate(60 275.3 472.3)" fill="none" stroke="#bdbdbd" stroke-width="0.7" />
<ellipse cx="276" cy="471.9" rx="9.3" ry="5.95" transform="rotate(60 276 471.9)" fill="none" stroke="#bdbdbd" stroke-width="0.7" />
<ellipse cx="276.8" cy="471.4" rx="7.6" ry="4.86" transform="rotate(60 276.8 471.4)" fill="none" stroke="#bdbdbd" stroke-width="0.7" />
<path d="M286.6,462.0 C287.2,463.3 289.6,467.0 290.5,470.0 C291.4,473.0 291.8,478.3 292.0,480.0" fill="none" stroke="#bdbdbd" stroke-width="0.7" stroke-linejoin="round" stroke-linecap="round" />
<polyline points="241.5,470 250,466 250,478 253.5,481 253.5,500 247.5,496 247.5,480.5 241.5,477" fill="none" stroke="#bdbdbd" stroke-width="0.7" stroke-linejoin="round" />
<polyline points="250,478 256,474.5 259,477 259,497 253.5,500" fill="none" stroke="#bdbdbd" stroke-width="0.7" stroke-linejoin="round" />
<ellipse cx="252.8" cy="485.5" rx="1.5" ry="0.9" transform="rotate(60 252.8 485.5)" fill="none" stroke="#bdbdbd" stroke-width="0.7" />
<ellipse cx="252.8" cy="496" rx="1.5" ry="0.9" transform="rotate(60 252.8 496)" fill="none" stroke="#bdbdbd" stroke-width="0.7" />
<polyline points="240,495 246,499 264,489 262.5,480" fill="none" stroke="#bdbdbd" stroke-width="0.7" stroke-linejoin="round" />
<polyline points="246,499 246,506 240,503" fill="none" stroke="#bdbdbd" stroke-width="0.7" stroke-linejoin="round" />
<polyline points="240,503 240,525.9 258.9,534.6 272.7,527.7 272.7,514.7 266,511 266,503 258.5,507.5 258.5,515 251,519.5 240.5,513.5" fill="none" stroke="#bdbdbd" stroke-width="0.7" stroke-linejoin="round" />
<polyline points="258.9,534.6 258.9,522 272.7,514.7" fill="none" stroke="#bdbdbd" stroke-width="0.7" stroke-linejoin="round" />
<polyline points="258.9,522 246,515.5" fill="none" stroke="#bdbdbd" stroke-width="0.7" stroke-linejoin="round" />
<polyline points="246,506 262,497.5 266,499.5 266,503" fill="none" stroke="#bdbdbd" stroke-width="0.7" stroke-linejoin="round" />
<ellipse cx="248" cy="510" rx="3" ry="1.86" transform="rotate(60 248 510)" fill="none" stroke="#bdbdbd" stroke-width="0.7" />
<ellipse cx="248" cy="510" rx="1.5" ry="0.93" transform="rotate(60 248 510)" fill="none" stroke="#bdbdbd" stroke-width="0.7" />
<ellipse cx="247" cy="523.5" rx="3" ry="1.86" transform="rotate(60 247 523.5)" fill="none" stroke="#bdbdbd" stroke-width="0.7" />
<ellipse cx="247" cy="523.5" rx="1.5" ry="0.93" transform="rotate(60 247 523.5)" fill="none" stroke="#bdbdbd" stroke-width="0.7" />
<polyline points="251,504.5 255,507 255,514" fill="none" stroke="#bdbdbd" stroke-width="0.7" stroke-linejoin="round" />
<polyline points="262,497.5 262,505" fill="none" stroke="#bdbdbd" stroke-width="0.7" stroke-linejoin="round" />
<line x1="36" y1="475" x2="100" y2="428" stroke="#666" stroke-width="0.5" stroke-dasharray="9 2 2 2"/>
<polyline points="8.3,413.6 9.2,398 98.6,347.8 109.7,353.9" fill="none" stroke="#666" stroke-width="0.5" stroke-linejoin="round" />
<line x1="36" y1="366" x2="50" y2="374.7" stroke="#666" stroke-width="0.5" />
<line x1="15.3" y1="408" x2="18.9" y2="433" stroke="#666" stroke-width="0.5" />
<line x1="31" y1="398.3" x2="44.4" y2="423.3" stroke="#666" stroke-width="0.5" />
<line x1="60" y1="381" x2="90.3" y2="429" stroke="#666" stroke-width="0.5" />
<line x1="75" y1="372" x2="83.3" y2="395.6" stroke="#666" stroke-width="0.5" />
<line x1="98" y1="358" x2="108.3" y2="373.3" stroke="#666" stroke-width="0.5" />
<text x="14.4" y="406" font-size="6.5" text-anchor="middle" fill="#6a6a6a">5</text>
<text x="30" y="396.5" font-size="6.5" text-anchor="middle" fill="#6a6a6a">4</text>
<text x="57.8" y="379.5" font-size="6.5" text-anchor="middle" fill="#6a6a6a">6</text>
<text x="73.6" y="370.5" font-size="6.5" text-anchor="middle" fill="#6a6a6a">3</text>
<text x="96.7" y="356.5" font-size="6.5" text-anchor="middle" fill="#6a6a6a">2</text>
<line x1="14" y1="458" x2="27" y2="476" stroke="#666" stroke-width="0.5" />
<line x1="133" y1="335" x2="154.6" y2="377" stroke="#666" stroke-width="0.5" />
<line x1="154.5" y1="323" x2="167" y2="370" stroke="#666" stroke-width="0.5" />
<line x1="177" y1="314" x2="189.4" y2="354.6" stroke="#666" stroke-width="0.5" />
<line x1="200.5" y1="309" x2="209.8" y2="340.6" stroke="#666" stroke-width="0.5" />
<line x1="232.6" y1="283.2" x2="237.2" y2="329" stroke="#666" stroke-width="0.5" />
<line x1="247.2" y1="310.3" x2="252.5" y2="320.7" stroke="#666" stroke-width="0.5" />
<ellipse cx="60.5" cy="449.3" rx="37" ry="21.09" transform="rotate(60 60.5 449.3)" fill="#fff" stroke="#3a3a3a" stroke-width="0.8" />
<ellipse cx="60.5" cy="449.3" rx="25" ry="15" transform="rotate(60 60.5 449.3)" fill="#fff" stroke="#3a3a3a" stroke-width="0.8" />
<ellipse cx="80.39" cy="471.45" rx="1.3" ry="0.78" transform="rotate(60 80.39 471.45)" fill="#fff" stroke="#3a3a3a" stroke-width="0.6" />
<ellipse cx="81.16" cy="452.5" rx="1.3" ry="0.78" transform="rotate(60 81.16 452.5)" fill="#fff" stroke="#3a3a3a" stroke-width="0.6" />
<ellipse cx="69.83" cy="431.67" rx="1.3" ry="0.78" transform="rotate(60 69.83 431.67)" fill="#fff" stroke="#3a3a3a" stroke-width="0.6" />
<ellipse cx="53.03" cy="421.17" rx="1.3" ry="0.78" transform="rotate(60 53.03 421.17)" fill="#fff" stroke="#3a3a3a" stroke-width="0.6" />
<ellipse cx="40.61" cy="427.15" rx="1.3" ry="0.78" transform="rotate(60 40.61 427.15)" fill="#fff" stroke="#3a3a3a" stroke-width="0.6" />
<ellipse cx="39.84" cy="446.1" rx="1.3" ry="0.78" transform="rotate(60 39.84 446.1)" fill="#fff" stroke="#3a3a3a" stroke-width="0.6" />
<ellipse cx="51.17" cy="466.93" rx="1.3" ry="0.78" transform="rotate(60 51.17 466.93)" fill="#fff" stroke="#3a3a3a" stroke-width="0.6" />
<ellipse cx="67.97" cy="477.43" rx="1.3" ry="0.78" transform="rotate(60 67.97 477.43)" fill="#fff" stroke="#3a3a3a" stroke-width="0.6" />
<line x1="26.7" y1="432" x2="43" y2="424" stroke="#666" stroke-width="0.5" />
<polygon points="15.2,438.92 27.32,433.36 26.08,430.64 13.95,436.19" fill="#fff" stroke="#3a3a3a" stroke-width="0.7" stroke-linejoin="round" />
<line x1="20.32" y1="436.58" x2="19.07" y2="433.85" stroke="#3a3a3a" stroke-width="0.4" />
<line x1="21.19" y1="436.17" x2="19.94" y2="433.45" stroke="#3a3a3a" stroke-width="0.4" />
<line x1="22.07" y1="435.77" x2="20.82" y2="433.05" stroke="#3a3a3a" stroke-width="0.4" />
<line x1="22.95" y1="435.37" x2="21.7" y2="432.64" stroke="#3a3a3a" stroke-width="0.4" />
<line x1="23.82" y1="434.97" x2="22.57" y2="432.24" stroke="#3a3a3a" stroke-width="0.4" />
<line x1="24.7" y1="434.57" x2="23.45" y2="431.84" stroke="#3a3a3a" stroke-width="0.4" />
<line x1="25.57" y1="434.17" x2="24.32" y2="431.44" stroke="#3a3a3a" stroke-width="0.4" />
<line x1="26.45" y1="433.77" x2="25.2" y2="431.04" stroke="#3a3a3a" stroke-width="0.4" />
<polygon points="13.38,440.96 15.66,439.92 13.49,435.19 11.22,436.24" fill="#fff" stroke="#3a3a3a" stroke-width="0.7" stroke-linejoin="round" />
<ellipse cx="12.3" cy="438.6" rx="2.6" ry="1.56" transform="rotate(60 12.3 438.6)" fill="#fff" stroke="#3a3a3a" stroke-width="0.7" />
<polygon points="23.05,484.36 40.7,474.72 38.5,470.68 20.85,480.32" fill="#fff" stroke="#3a3a3a" stroke-width="0.7" stroke-linejoin="round" />
<line x1="30.05" y1="480.54" x2="27.84" y2="476.5" stroke="#3a3a3a" stroke-width="0.4" />
<line x1="30.87" y1="480.09" x2="28.66" y2="476.05" stroke="#3a3a3a" stroke-width="0.4" />
<line x1="31.69" y1="479.64" x2="29.48" y2="475.61" stroke="#3a3a3a" stroke-width="0.4" />
<line x1="32.51" y1="479.2" x2="30.3" y2="475.16" stroke="#3a3a3a" stroke-width="0.4" />
<line x1="33.33" y1="478.75" x2="31.12" y2="474.71" stroke="#3a3a3a" stroke-width="0.4" />
<line x1="34.15" y1="478.3" x2="31.94" y2="474.26" stroke="#3a3a3a" stroke-width="0.4" />
<line x1="34.97" y1="477.85" x2="32.76" y2="473.82" stroke="#3a3a3a" stroke-width="0.4" />
<line x1="35.79" y1="477.4" x2="33.58" y2="473.37" stroke="#3a3a3a" stroke-width="0.4" />
<line x1="36.61" y1="476.96" x2="34.4" y2="472.92" stroke="#3a3a3a" stroke-width="0.4" />
<line x1="37.42" y1="476.51" x2="35.22" y2="472.47" stroke="#3a3a3a" stroke-width="0.4" />
<line x1="38.24" y1="476.06" x2="36.04" y2="472.02" stroke="#3a3a3a" stroke-width="0.4" />
<line x1="39.06" y1="475.61" x2="36.86" y2="471.58" stroke="#3a3a3a" stroke-width="0.4" />
<line x1="39.88" y1="475.17" x2="37.68" y2="471.13" stroke="#3a3a3a" stroke-width="0.4" />
<polygon points="20.06,488.27 24.01,486.12 19.89,478.57 15.94,480.73" fill="#fff" stroke="#3a3a3a" stroke-width="0.7" stroke-linejoin="round" />
<ellipse cx="18" cy="484.5" rx="4.3" ry="2.58" transform="rotate(60 18 484.5)" fill="#fff" stroke="#3a3a3a" stroke-width="0.7" />
<ellipse cx="17.6" cy="484.7" rx="2.6" ry="1.56" transform="rotate(60 17.6 484.7)" fill="#fff" stroke="#3a3a3a" stroke-width="0.6" />
<ellipse cx="91.8" cy="401.95" rx="6.3" ry="3.65" transform="rotate(60 91.8 401.95)" fill="#fff" stroke="#3a3a3a" stroke-width="0.8" />
<polygon points="88.45,411.16 82.15,400.24 88.65,396.49 94.95,407.41" fill="#fff" stroke="none" stroke-width="0.7" stroke-linejoin="round" />
<line x1="88.45" y1="411.16" x2="94.95" y2="407.41" stroke="#3a3a3a" stroke-width="0.8" />
<line x1="82.15" y1="400.24" x2="88.65" y2="396.49" stroke="#3a3a3a" stroke-width="0.8" />
<ellipse cx="85.3" cy="405.7" rx="6.3" ry="3.65" transform="rotate(60 85.3 405.7)" fill="#fff" stroke="#3a3a3a" stroke-width="0.8" />
<ellipse cx="85.3" cy="405.7" rx="5.2" ry="3.02" transform="rotate(60 85.3 405.7)" fill="#fff" stroke="#3a3a3a" stroke-width="0.6400000000000001" />
<ellipse cx="90.84" cy="432.7" rx="4.8" ry="2.78" transform="rotate(60 90.84 432.7)" fill="#fff" stroke="#3a3a3a" stroke-width="0.8" />
<polygon points="89.6,438.96 84.8,430.64 88.44,428.54 93.24,436.86" fill="#fff" stroke="none" stroke-width="0.7" stroke-linejoin="round" />
<line x1="89.6" y1="438.96" x2="93.24" y2="436.86" stroke="#3a3a3a" stroke-width="0.8" />
<line x1="84.8" y1="430.64" x2="88.44" y2="428.54" stroke="#3a3a3a" stroke-width="0.8" />
<ellipse cx="87.2" cy="434.8" rx="4.8" ry="2.78" transform="rotate(60 87.2 434.8)" fill="#fff" stroke="#3a3a3a" stroke-width="0.8" />
<ellipse cx="87.2" cy="434.8" rx="3.9" ry="2.26" transform="rotate(60 87.2 434.8)" fill="#fff" stroke="#3a3a3a" stroke-width="0.6400000000000001" />
<ellipse cx="137.48" cy="406.7" rx="42" ry="25.2" transform="rotate(60 137.48 406.7)" fill="#2e2e2e" stroke="#222" stroke-width="0.8" />
<polygon points="149.3,448.37 107.3,375.63 116.48,370.33 158.48,443.07" fill="#2e2e2e" stroke="none" stroke-width="0.7" stroke-linejoin="round" />
<line x1="149.3" y1="448.37" x2="157.96" y2="443.37" stroke="#f4f4f4" stroke-width="0.72" />
<line x1="150.38" y1="447.69" x2="159.04" y2="442.69" stroke="#f4f4f4" stroke-width="0.72" />
<line x1="151.4" y1="446.91" x2="160.06" y2="441.91" stroke="#f4f4f4" stroke-width="0.72" />
<line x1="152.36" y1="446.05" x2="161.02" y2="441.05" stroke="#f4f4f4" stroke-width="0.72" />
<line x1="153.26" y1="445.09" x2="161.92" y2="440.09" stroke="#f4f4f4" stroke-width="0.72" />
<line x1="154.1" y1="444.05" x2="162.76" y2="439.05" stroke="#f4f4f4" stroke-width="0.72" />
<line x1="154.87" y1="442.93" x2="163.53" y2="437.93" stroke="#f4f4f4" stroke-width="0.72" />
<line x1="155.57" y1="441.73" x2="164.23" y2="436.73" stroke="#f4f4f4" stroke-width="0.72" />
<line x1="156.2" y1="440.46" x2="164.86" y2="435.46" stroke="#f4f4f4" stroke-width="0.72" />
<line x1="156.76" y1="439.11" x2="165.43" y2="434.11" stroke="#f4f4f4" stroke-width="0.72" />
<line x1="157.25" y1="437.69" x2="165.91" y2="432.69" stroke="#f4f4f4" stroke-width="0.72" />
<line x1="157.67" y1="436.2" x2="166.33" y2="431.2" stroke="#f4f4f4" stroke-width="0.72" />
<line x1="158" y1="434.66" x2="166.66" y2="429.66" stroke="#f4f4f4" stroke-width="0.72" />
<line x1="158.26" y1="433.05" x2="166.93" y2="428.05" stroke="#f4f4f4" stroke-width="0.72" />
<line x1="158.45" y1="431.39" x2="167.11" y2="426.39" stroke="#f4f4f4" stroke-width="0.72" />
<line x1="158.56" y1="429.68" x2="167.22" y2="424.68" stroke="#f4f4f4" stroke-width="0.72" />
<line x1="158.59" y1="427.93" x2="167.25" y2="422.93" stroke="#f4f4f4" stroke-width="0.72" />
<line x1="158.54" y1="426.13" x2="167.2" y2="421.13" stroke="#f4f4f4" stroke-width="0.72" />
<line x1="158.41" y1="424.3" x2="167.07" y2="419.3" stroke="#f4f4f4" stroke-width="0.72" />
<line x1="158.21" y1="422.44" x2="166.87" y2="417.44" stroke="#f4f4f4" stroke-width="0.72" />
<line x1="157.93" y1="420.55" x2="166.59" y2="415.55" stroke="#f4f4f4" stroke-width="0.72" />
<line x1="157.57" y1="418.64" x2="166.23" y2="413.64" stroke="#f4f4f4" stroke-width="0.72" />
<line x1="157.14" y1="416.71" x2="165.8" y2="411.71" stroke="#f4f4f4" stroke-width="0.72" />
<line x1="156.64" y1="414.77" x2="165.3" y2="409.77" stroke="#f4f4f4" stroke-width="0.72" />
<line x1="156.06" y1="412.82" x2="164.72" y2="407.82" stroke="#f4f4f4" stroke-width="0.72" />
<line x1="155.41" y1="410.87" x2="164.07" y2="405.87" stroke="#f4f4f4" stroke-width="0.72" />
<line x1="154.69" y1="408.92" x2="163.35" y2="403.92" stroke="#f4f4f4" stroke-width="0.72" />
<line x1="153.9" y1="406.98" x2="162.56" y2="401.98" stroke="#f4f4f4" stroke-width="0.72" />
<line x1="153.05" y1="405.05" x2="161.71" y2="400.05" stroke="#f4f4f4" stroke-width="0.72" />
<line x1="152.14" y1="403.14" x2="160.8" y2="398.14" stroke="#f4f4f4" stroke-width="0.72" />
<line x1="151.16" y1="401.26" x2="159.82" y2="396.26" stroke="#f4f4f4" stroke-width="0.72" />
<line x1="150.12" y1="399.4" x2="158.78" y2="394.4" stroke="#f4f4f4" stroke-width="0.72" />
<line x1="149.03" y1="397.57" x2="157.69" y2="392.57" stroke="#f4f4f4" stroke-width="0.72" />
<line x1="147.89" y1="395.78" x2="156.55" y2="390.78" stroke="#f4f4f4" stroke-width="0.72" />
<line x1="146.69" y1="394.04" x2="155.35" y2="389.04" stroke="#f4f4f4" stroke-width="0.72" />
<line x1="145.45" y1="392.34" x2="154.11" y2="387.34" stroke="#f4f4f4" stroke-width="0.72" />
<line x1="144.16" y1="390.69" x2="152.82" y2="385.69" stroke="#f4f4f4" stroke-width="0.72" />
<line x1="142.84" y1="389.09" x2="151.5" y2="384.09" stroke="#f4f4f4" stroke-width="0.72" />
<line x1="141.47" y1="387.55" x2="150.13" y2="382.55" stroke="#f4f4f4" stroke-width="0.72" />
<line x1="140.07" y1="386.08" x2="148.73" y2="381.08" stroke="#f4f4f4" stroke-width="0.72" />
<line x1="138.65" y1="384.67" x2="147.31" y2="379.67" stroke="#f4f4f4" stroke-width="0.72" />
<line x1="137.19" y1="383.33" x2="145.85" y2="378.33" stroke="#f4f4f4" stroke-width="0.72" />
<line x1="135.71" y1="382.07" x2="144.37" y2="377.07" stroke="#f4f4f4" stroke-width="0.72" />
<line x1="134.22" y1="380.88" x2="142.88" y2="375.88" stroke="#f4f4f4" stroke-width="0.72" />
<line x1="132.7" y1="379.77" x2="141.36" y2="374.77" stroke="#f4f4f4" stroke-width="0.72" />
<line x1="131.18" y1="378.75" x2="139.84" y2="373.75" stroke="#f4f4f4" stroke-width="0.72" />
<line x1="129.65" y1="377.81" x2="138.31" y2="372.81" stroke="#f4f4f4" stroke-width="0.72" />
<line x1="128.12" y1="376.96" x2="136.78" y2="371.96" stroke="#f4f4f4" stroke-width="0.72" />
<line x1="126.58" y1="376.19" x2="135.24" y2="371.19" stroke="#f4f4f4" stroke-width="0.72" />
<line x1="125.05" y1="375.52" x2="133.71" y2="370.52" stroke="#f4f4f4" stroke-width="0.72" />
<line x1="123.53" y1="374.95" x2="132.19" y2="369.95" stroke="#f4f4f4" stroke-width="0.72" />
<line x1="122.02" y1="374.47" x2="130.68" y2="369.47" stroke="#f4f4f4" stroke-width="0.72" />
<line x1="120.53" y1="374.08" x2="129.19" y2="369.08" stroke="#f4f4f4" stroke-width="0.72" />
<line x1="119.06" y1="373.8" x2="127.72" y2="368.8" stroke="#f4f4f4" stroke-width="0.72" />
<line x1="117.61" y1="373.61" x2="126.27" y2="368.61" stroke="#f4f4f4" stroke-width="0.72" />
<line x1="116.19" y1="373.52" x2="124.85" y2="368.52" stroke="#f4f4f4" stroke-width="0.72" />
<line x1="114.8" y1="373.52" x2="123.46" y2="368.52" stroke="#f4f4f4" stroke-width="0.72" />
<line x1="113.44" y1="373.63" x2="122.1" y2="368.63" stroke="#f4f4f4" stroke-width="0.72" />
<line x1="112.12" y1="373.84" x2="120.78" y2="368.84" stroke="#f4f4f4" stroke-width="0.72" />
<line x1="110.85" y1="374.14" x2="119.51" y2="369.14" stroke="#f4f4f4" stroke-width="0.72" />
<line x1="109.62" y1="374.54" x2="118.28" y2="369.54" stroke="#f4f4f4" stroke-width="0.72" />
<line x1="108.43" y1="375.04" x2="117.09" y2="370.04" stroke="#f4f4f4" stroke-width="0.72" />
<line x1="107.3" y1="375.63" x2="115.96" y2="370.63" stroke="#f4f4f4" stroke-width="0.72" />
<line x1="106.22" y1="376.31" x2="114.88" y2="371.31" stroke="#f4f4f4" stroke-width="0.72" />
<line x1="105.2" y1="377.09" x2="113.86" y2="372.09" stroke="#f4f4f4" stroke-width="0.72" />
<line x1="104.24" y1="377.95" x2="112.9" y2="372.95" stroke="#f4f4f4" stroke-width="0.72" />
<line x1="103.34" y1="378.91" x2="112" y2="373.91" stroke="#f4f4f4" stroke-width="0.72" />
<line x1="102.5" y1="379.95" x2="111.16" y2="374.95" stroke="#f4f4f4" stroke-width="0.72" />
<line x1="101.73" y1="381.07" x2="110.39" y2="376.07" stroke="#f4f4f4" stroke-width="0.72" />
<line x1="101.03" y1="382.27" x2="109.69" y2="377.27" stroke="#f4f4f4" stroke-width="0.72" />
<line x1="100.4" y1="383.54" x2="109.06" y2="378.54" stroke="#f4f4f4" stroke-width="0.72" />
<line x1="99.84" y1="384.89" x2="108.5" y2="379.89" stroke="#f4f4f4" stroke-width="0.72" />
<line x1="99.35" y1="386.31" x2="108.01" y2="381.31" stroke="#f4f4f4" stroke-width="0.72" />
<line x1="98.93" y1="387.8" x2="107.59" y2="382.8" stroke="#f4f4f4" stroke-width="0.72" />
<line x1="98.6" y1="389.34" x2="107.26" y2="384.34" stroke="#f4f4f4" stroke-width="0.72" />
<line x1="98.34" y1="390.95" x2="107" y2="385.95" stroke="#f4f4f4" stroke-width="0.72" />
<line x1="98.15" y1="392.61" x2="106.81" y2="387.61" stroke="#f4f4f4" stroke-width="0.72" />
<line x1="98.04" y1="394.32" x2="106.7" y2="389.32" stroke="#f4f4f4" stroke-width="0.72" />
<line x1="98.01" y1="396.07" x2="106.67" y2="391.07" stroke="#f4f4f4" stroke-width="0.72" />
<line x1="98.06" y1="397.87" x2="106.72" y2="392.87" stroke="#f4f4f4" stroke-width="0.72" />
<line x1="98.19" y1="399.7" x2="106.85" y2="394.7" stroke="#f4f4f4" stroke-width="0.72" />
<line x1="98.39" y1="401.56" x2="107.05" y2="396.56" stroke="#f4f4f4" stroke-width="0.72" />
<line x1="98.67" y1="403.45" x2="107.33" y2="398.45" stroke="#f4f4f4" stroke-width="0.72" />
<line x1="99.03" y1="405.36" x2="107.69" y2="400.36" stroke="#f4f4f4" stroke-width="0.72" />
<line x1="99.46" y1="407.29" x2="108.12" y2="402.29" stroke="#f4f4f4" stroke-width="0.72" />
<line x1="99.96" y1="409.23" x2="108.62" y2="404.23" stroke="#f4f4f4" stroke-width="0.72" />
<line x1="100.54" y1="411.18" x2="109.2" y2="406.18" stroke="#f4f4f4" stroke-width="0.72" />
<line x1="101.19" y1="413.13" x2="109.85" y2="408.13" stroke="#f4f4f4" stroke-width="0.72" />
<line x1="101.91" y1="415.08" x2="110.57" y2="410.08" stroke="#f4f4f4" stroke-width="0.72" />
<line x1="102.7" y1="417.02" x2="111.36" y2="412.02" stroke="#f4f4f4" stroke-width="0.72" />
<line x1="103.55" y1="418.95" x2="112.21" y2="413.95" stroke="#f4f4f4" stroke-width="0.72" />
<line x1="104.46" y1="420.86" x2="113.12" y2="415.86" stroke="#f4f4f4" stroke-width="0.72" />
<line x1="105.44" y1="422.74" x2="114.1" y2="417.74" stroke="#f4f4f4" stroke-width="0.72" />
<line x1="106.48" y1="424.6" x2="115.14" y2="419.6" stroke="#f4f4f4" stroke-width="0.72" />
<line x1="107.57" y1="426.43" x2="116.23" y2="421.43" stroke="#f4f4f4" stroke-width="0.72" />
<line x1="108.71" y1="428.22" x2="117.37" y2="423.22" stroke="#f4f4f4" stroke-width="0.72" />
<line x1="109.91" y1="429.96" x2="118.57" y2="424.96" stroke="#f4f4f4" stroke-width="0.72" />
<line x1="111.15" y1="431.66" x2="119.81" y2="426.66" stroke="#f4f4f4" stroke-width="0.72" />
<line x1="112.44" y1="433.31" x2="121.1" y2="428.31" stroke="#f4f4f4" stroke-width="0.72" />
<line x1="113.76" y1="434.91" x2="122.42" y2="429.91" stroke="#f4f4f4" stroke-width="0.72" />
<line x1="115.13" y1="436.45" x2="123.79" y2="431.45" stroke="#f4f4f4" stroke-width="0.72" />
<line x1="116.53" y1="437.92" x2="125.19" y2="432.92" stroke="#f4f4f4" stroke-width="0.72" />
<line x1="117.95" y1="439.33" x2="126.61" y2="434.33" stroke="#f4f4f4" stroke-width="0.72" />
<line x1="119.41" y1="440.67" x2="128.07" y2="435.67" stroke="#f4f4f4" stroke-width="0.72" />
<line x1="120.89" y1="441.93" x2="129.55" y2="436.93" stroke="#f4f4f4" stroke-width="0.72" />
<line x1="122.38" y1="443.12" x2="131.04" y2="438.12" stroke="#f4f4f4" stroke-width="0.72" />
<line x1="123.9" y1="444.23" x2="132.56" y2="439.23" stroke="#f4f4f4" stroke-width="0.72" />
<line x1="125.42" y1="445.25" x2="134.08" y2="440.25" stroke="#f4f4f4" stroke-width="0.72" />
<line x1="126.95" y1="446.19" x2="135.61" y2="441.19" stroke="#f4f4f4" stroke-width="0.72" />
<line x1="128.48" y1="447.04" x2="137.14" y2="442.04" stroke="#f4f4f4" stroke-width="0.72" />
<line x1="130.02" y1="447.81" x2="138.68" y2="442.81" stroke="#f4f4f4" stroke-width="0.72" />
<line x1="131.55" y1="448.48" x2="140.21" y2="443.48" stroke="#f4f4f4" stroke-width="0.72" />
<line x1="133.07" y1="449.05" x2="141.73" y2="444.05" stroke="#f4f4f4" stroke-width="0.72" />
<line x1="134.58" y1="449.53" x2="143.24" y2="444.53" stroke="#f4f4f4" stroke-width="0.72" />
<line x1="136.07" y1="449.92" x2="144.73" y2="444.92" stroke="#f4f4f4" stroke-width="0.72" />
<line x1="137.54" y1="450.2" x2="146.2" y2="445.2" stroke="#f4f4f4" stroke-width="0.72" />
<line x1="138.99" y1="450.39" x2="147.65" y2="445.39" stroke="#f4f4f4" stroke-width="0.72" />
<line x1="140.41" y1="450.48" x2="149.07" y2="445.48" stroke="#f4f4f4" stroke-width="0.72" />
<line x1="141.8" y1="450.48" x2="150.46" y2="445.48" stroke="#f4f4f4" stroke-width="0.72" />
<line x1="143.16" y1="450.37" x2="151.82" y2="445.37" stroke="#f4f4f4" stroke-width="0.72" />
<line x1="144.48" y1="450.16" x2="153.14" y2="445.16" stroke="#f4f4f4" stroke-width="0.72" />
<line x1="145.75" y1="449.86" x2="154.41" y2="444.86" stroke="#f4f4f4" stroke-width="0.72" />
<line x1="146.98" y1="449.46" x2="155.64" y2="444.46" stroke="#f4f4f4" stroke-width="0.72" />
<line x1="148.17" y1="448.96" x2="156.83" y2="443.96" stroke="#f4f4f4" stroke-width="0.72" />
<line x1="149.3" y1="448.37" x2="158.48" y2="443.07" stroke="#222" stroke-width="0.8" />
<line x1="107.3" y1="375.63" x2="116.48" y2="370.33" stroke="#222" stroke-width="0.8" />
<ellipse cx="128.3" cy="412" rx="42" ry="25.2" transform="rotate(60 128.3 412)" fill="#fff" stroke="#222" stroke-width="0.9" />
<line x1="147.31" y1="444.92" x2="149.3" y2="448.37" stroke="#1c1c1c" stroke-width="0.95" />
<line x1="148.56" y1="444.1" x2="150.68" y2="447.47" stroke="#1c1c1c" stroke-width="0.95" />
<line x1="149.72" y1="443.15" x2="151.97" y2="446.42" stroke="#1c1c1c" stroke-width="0.95" />
<line x1="150.79" y1="442.06" x2="153.15" y2="445.22" stroke="#1c1c1c" stroke-width="0.95" />
<line x1="151.77" y1="440.84" x2="154.23" y2="443.87" stroke="#1c1c1c" stroke-width="0.95" />
<line x1="152.65" y1="439.51" x2="155.2" y2="442.39" stroke="#1c1c1c" stroke-width="0.95" />
<line x1="153.42" y1="438.05" x2="156.05" y2="440.78" stroke="#1c1c1c" stroke-width="0.95" />
<line x1="154.08" y1="436.48" x2="156.79" y2="439.05" stroke="#1c1c1c" stroke-width="0.95" />
<line x1="154.63" y1="434.81" x2="157.4" y2="437.2" stroke="#1c1c1c" stroke-width="0.95" />
<line x1="155.07" y1="433.03" x2="157.89" y2="435.24" stroke="#1c1c1c" stroke-width="0.95" />
<line x1="155.4" y1="431.17" x2="158.25" y2="433.19" stroke="#1c1c1c" stroke-width="0.95" />
<line x1="155.61" y1="429.23" x2="158.48" y2="431.04" stroke="#1c1c1c" stroke-width="0.95" />
<line x1="155.7" y1="427.21" x2="158.58" y2="428.81" stroke="#1c1c1c" stroke-width="0.95" />
<line x1="155.68" y1="425.13" x2="158.55" y2="426.51" stroke="#1c1c1c" stroke-width="0.95" />
<line x1="155.54" y1="422.99" x2="158.4" y2="424.15" stroke="#1c1c1c" stroke-width="0.95" />
<line x1="155.28" y1="420.81" x2="158.11" y2="421.73" stroke="#1c1c1c" stroke-width="0.95" />
<line x1="154.91" y1="418.58" x2="157.7" y2="419.27" stroke="#1c1c1c" stroke-width="0.95" />
<line x1="154.42" y1="416.33" x2="157.16" y2="416.79" stroke="#1c1c1c" stroke-width="0.95" />
<line x1="153.82" y1="414.06" x2="156.5" y2="414.28" stroke="#1c1c1c" stroke-width="0.95" />
<line x1="153.11" y1="411.78" x2="155.72" y2="411.76" stroke="#1c1c1c" stroke-width="0.95" />
<line x1="152.3" y1="409.51" x2="154.82" y2="409.24" stroke="#1c1c1c" stroke-width="0.95" />
<line x1="151.38" y1="407.24" x2="153.8" y2="406.74" stroke="#1c1c1c" stroke-width="0.95" />
<line x1="150.36" y1="404.99" x2="152.68" y2="404.26" stroke="#1c1c1c" stroke-width="0.95" />
<line x1="149.25" y1="402.77" x2="151.45" y2="401.81" stroke="#1c1c1c" stroke-width="0.95" />
<line x1="148.05" y1="400.6" x2="150.12" y2="399.4" stroke="#1c1c1c" stroke-width="0.95" />
<line x1="146.77" y1="398.47" x2="148.7" y2="397.05" stroke="#1c1c1c" stroke-width="0.95" />
<line x1="145.4" y1="396.4" x2="147.2" y2="394.76" stroke="#1c1c1c" stroke-width="0.95" />
<line x1="143.96" y1="394.39" x2="145.61" y2="392.55" stroke="#1c1c1c" stroke-width="0.95" />
<line x1="142.46" y1="392.47" x2="143.95" y2="390.42" stroke="#1c1c1c" stroke-width="0.95" />
<line x1="140.89" y1="390.62" x2="142.22" y2="388.38" stroke="#1c1c1c" stroke-width="0.95" />
<line x1="139.27" y1="388.87" x2="140.43" y2="386.44" stroke="#1c1c1c" stroke-width="0.95" />
<line x1="137.61" y1="387.21" x2="138.59" y2="384.61" stroke="#1c1c1c" stroke-width="0.95" />
<line x1="135.9" y1="385.67" x2="136.7" y2="382.9" stroke="#1c1c1c" stroke-width="0.95" />
<line x1="134.16" y1="384.23" x2="134.78" y2="381.32" stroke="#1c1c1c" stroke-width="0.95" />
<line x1="132.4" y1="382.91" x2="132.83" y2="379.86" stroke="#1c1c1c" stroke-width="0.95" />
<line x1="130.62" y1="381.72" x2="130.86" y2="378.54" stroke="#1c1c1c" stroke-width="0.95" />
<line x1="128.83" y1="380.66" x2="128.88" y2="377.37" stroke="#1c1c1c" stroke-width="0.95" />
<line x1="127.03" y1="379.73" x2="126.9" y2="376.35" stroke="#1c1c1c" stroke-width="0.95" />
<line x1="125.25" y1="378.94" x2="124.93" y2="375.47" stroke="#1c1c1c" stroke-width="0.95" />
<line x1="123.47" y1="378.29" x2="122.96" y2="374.76" stroke="#1c1c1c" stroke-width="0.95" />
<line x1="121.72" y1="377.79" x2="121.03" y2="374.2" stroke="#1c1c1c" stroke-width="0.95" />
<line x1="119.99" y1="377.43" x2="119.12" y2="373.81" stroke="#1c1c1c" stroke-width="0.95" />
<line x1="118.3" y1="377.22" x2="117.25" y2="373.57" stroke="#1c1c1c" stroke-width="0.95" />
<line x1="116.65" y1="377.16" x2="115.43" y2="373.51" stroke="#1c1c1c" stroke-width="0.95" />
<line x1="115.05" y1="377.25" x2="113.66" y2="373.61" stroke="#1c1c1c" stroke-width="0.95" />
<line x1="113.51" y1="377.49" x2="111.96" y2="373.87" stroke="#1c1c1c" stroke-width="0.95" />
<line x1="112.04" y1="377.88" x2="110.33" y2="374.29" stroke="#1c1c1c" stroke-width="0.95" />
<line x1="110.63" y1="378.41" x2="108.77" y2="374.88" stroke="#1c1c1c" stroke-width="0.95" />
<line x1="109.3" y1="379.08" x2="107.3" y2="375.63" stroke="#1c1c1c" stroke-width="0.95" />
<line x1="108.04" y1="379.9" x2="105.92" y2="376.53" stroke="#1c1c1c" stroke-width="0.95" />
<line x1="106.88" y1="380.85" x2="104.63" y2="377.58" stroke="#1c1c1c" stroke-width="0.95" />
<line x1="105.81" y1="381.94" x2="103.45" y2="378.78" stroke="#1c1c1c" stroke-width="0.95" />
<line x1="104.83" y1="383.16" x2="102.37" y2="380.13" stroke="#1c1c1c" stroke-width="0.95" />
<line x1="103.95" y1="384.49" x2="101.4" y2="381.61" stroke="#1c1c1c" stroke-width="0.95" />
<line x1="103.18" y1="385.95" x2="100.55" y2="383.22" stroke="#1c1c1c" stroke-width="0.95" />
<line x1="102.52" y1="387.52" x2="99.81" y2="384.95" stroke="#1c1c1c" stroke-width="0.95" />
<line x1="101.97" y1="389.19" x2="99.2" y2="386.8" stroke="#1c1c1c" stroke-width="0.95" />
<line x1="101.53" y1="390.97" x2="98.71" y2="388.76" stroke="#1c1c1c" stroke-width="0.95" />
<line x1="101.2" y1="392.83" x2="98.35" y2="390.81" stroke="#1c1c1c" stroke-width="0.95" />
<line x1="100.99" y1="394.77" x2="98.12" y2="392.96" stroke="#1c1c1c" stroke-width="0.95" />
<line x1="100.9" y1="396.79" x2="98.02" y2="395.19" stroke="#1c1c1c" stroke-width="0.95" />
<line x1="100.92" y1="398.87" x2="98.05" y2="397.49" stroke="#1c1c1c" stroke-width="0.95" />
<line x1="101.06" y1="401.01" x2="98.2" y2="399.85" stroke="#1c1c1c" stroke-width="0.95" />
<line x1="101.32" y1="403.19" x2="98.49" y2="402.27" stroke="#1c1c1c" stroke-width="0.95" />
<line x1="101.69" y1="405.42" x2="98.9" y2="404.73" stroke="#1c1c1c" stroke-width="0.95" />
<line x1="102.18" y1="407.67" x2="99.44" y2="407.21" stroke="#1c1c1c" stroke-width="0.95" />
<line x1="102.78" y1="409.94" x2="100.1" y2="409.72" stroke="#1c1c1c" stroke-width="0.95" />
<line x1="103.49" y1="412.22" x2="100.88" y2="412.24" stroke="#1c1c1c" stroke-width="0.95" />
<line x1="104.3" y1="414.49" x2="101.78" y2="414.76" stroke="#1c1c1c" stroke-width="0.95" />
<line x1="105.22" y1="416.76" x2="102.8" y2="417.26" stroke="#1c1c1c" stroke-width="0.95" />
<line x1="106.24" y1="419.01" x2="103.92" y2="419.74" stroke="#1c1c1c" stroke-width="0.95" />
<line x1="107.35" y1="421.23" x2="105.15" y2="422.19" stroke="#1c1c1c" stroke-width="0.95" />
<line x1="108.55" y1="423.4" x2="106.48" y2="424.6" stroke="#1c1c1c" stroke-width="0.95" />
<line x1="109.83" y1="425.53" x2="107.9" y2="426.95" stroke="#1c1c1c" stroke-width="0.95" />
<line x1="111.2" y1="427.6" x2="109.4" y2="429.24" stroke="#1c1c1c" stroke-width="0.95" />
<line x1="112.64" y1="429.61" x2="110.99" y2="431.45" stroke="#1c1c1c" stroke-width="0.95" />
<line x1="114.14" y1="431.53" x2="112.65" y2="433.58" stroke="#1c1c1c" stroke-width="0.95" />
<line x1="115.71" y1="433.38" x2="114.38" y2="435.62" stroke="#1c1c1c" stroke-width="0.95" />
<line x1="117.33" y1="435.13" x2="116.17" y2="437.56" stroke="#1c1c1c" stroke-width="0.95" />
<line x1="118.99" y1="436.79" x2="118.01" y2="439.39" stroke="#1c1c1c" stroke-width="0.95" />
<line x1="120.7" y1="438.33" x2="119.9" y2="441.1" stroke="#1c1c1c" stroke-width="0.95" />
<line x1="122.44" y1="439.77" x2="121.82" y2="442.68" stroke="#1c1c1c" stroke-width="0.95" />
<line x1="124.2" y1="441.09" x2="123.77" y2="444.14" stroke="#1c1c1c" stroke-width="0.95" />
<line x1="125.98" y1="442.28" x2="125.74" y2="445.46" stroke="#1c1c1c" stroke-width="0.95" />
<line x1="127.77" y1="443.34" x2="127.72" y2="446.63" stroke="#1c1c1c" stroke-width="0.95" />
<line x1="129.57" y1="444.27" x2="129.7" y2="447.65" stroke="#1c1c1c" stroke-width="0.95" />
<line x1="131.35" y1="445.06" x2="131.67" y2="448.53" stroke="#1c1c1c" stroke-width="0.95" />
<line x1="133.13" y1="445.71" x2="133.64" y2="449.24" stroke="#1c1c1c" stroke-width="0.95" />
<line x1="134.88" y1="446.21" x2="135.57" y2="449.8" stroke="#1c1c1c" stroke-width="0.95" />
<line x1="136.61" y1="446.57" x2="137.48" y2="450.19" stroke="#1c1c1c" stroke-width="0.95" />
<line x1="138.3" y1="446.78" x2="139.35" y2="450.43" stroke="#1c1c1c" stroke-width="0.95" />
<line x1="139.95" y1="446.84" x2="141.17" y2="450.49" stroke="#1c1c1c" stroke-width="0.95" />
<line x1="141.55" y1="446.75" x2="142.94" y2="450.39" stroke="#1c1c1c" stroke-width="0.95" />
<line x1="143.09" y1="446.51" x2="144.64" y2="450.13" stroke="#1c1c1c" stroke-width="0.95" />
<line x1="144.56" y1="446.12" x2="146.27" y2="449.71" stroke="#1c1c1c" stroke-width="0.95" />
<line x1="145.97" y1="445.59" x2="147.83" y2="449.12" stroke="#1c1c1c" stroke-width="0.95" />
<ellipse cx="128.3" cy="412" rx="37.8" ry="22.68" transform="rotate(60 128.3 412)" fill="none" stroke="#333" stroke-width="0.7" />
<ellipse cx="128.3" cy="412" rx="36.75" ry="22.05" transform="rotate(60 128.3 412)" fill="none" stroke="#333" stroke-width="0.5" />
<ellipse cx="149.08" cy="412.99" rx="8.4" ry="5.04" transform="rotate(60 149.08 412.99)" fill="#fff" stroke="#333" stroke-width="0.6" />
<ellipse cx="148.04" cy="413.59" rx="8.4" ry="5.04" transform="rotate(60 148.04 413.59)" fill="#fff" stroke="#333" stroke-width="0.7" />
<ellipse cx="145.32" cy="402.17" rx="0.9" ry="0.54" transform="rotate(60 145.32 402.17)" fill="none" stroke="#333" stroke-width="0.5" />
<ellipse cx="137.83" cy="393.51" rx="8.4" ry="5.04" transform="rotate(60 137.83 393.51)" fill="#fff" stroke="#333" stroke-width="0.6" />
<ellipse cx="136.79" cy="394.11" rx="8.4" ry="5.04" transform="rotate(60 136.79 394.11)" fill="#fff" stroke="#333" stroke-width="0.7" />
<ellipse cx="128.75" cy="384.99" rx="0.9" ry="0.54" transform="rotate(60 128.75 384.99)" fill="none" stroke="#333" stroke-width="0.5" />
<ellipse cx="121.6" cy="384.5" rx="8.4" ry="5.04" transform="rotate(60 121.6 384.5)" fill="#fff" stroke="#333" stroke-width="0.6" />
<ellipse cx="120.57" cy="385.1" rx="8.4" ry="5.04" transform="rotate(60 120.57 385.1)" fill="#fff" stroke="#333" stroke-width="0.7" />
<ellipse cx="111.92" cy="383.63" rx="0.9" ry="0.54" transform="rotate(60 111.92 383.63)" fill="none" stroke="#333" stroke-width="0.5" />
<ellipse cx="109.91" cy="391.25" rx="8.4" ry="5.04" transform="rotate(60 109.91 391.25)" fill="#fff" stroke="#333" stroke-width="0.6" />
<ellipse cx="108.87" cy="391.85" rx="8.4" ry="5.04" transform="rotate(60 108.87 391.85)" fill="#fff" stroke="#333" stroke-width="0.7" />
<ellipse cx="104.68" cy="398.89" rx="0.9" ry="0.54" transform="rotate(60 104.68 398.89)" fill="none" stroke="#333" stroke-width="0.5" />
<ellipse cx="109.6" cy="409.81" rx="8.4" ry="5.04" transform="rotate(60 109.6 409.81)" fill="#fff" stroke="#333" stroke-width="0.6" />
<ellipse cx="108.56" cy="410.41" rx="8.4" ry="5.04" transform="rotate(60 108.56 410.41)" fill="#fff" stroke="#333" stroke-width="0.7" />
<ellipse cx="111.28" cy="421.83" rx="0.9" ry="0.54" transform="rotate(60 111.28 421.83)" fill="none" stroke="#333" stroke-width="0.5" />
<ellipse cx="120.85" cy="429.29" rx="8.4" ry="5.04" transform="rotate(60 120.85 429.29)" fill="#fff" stroke="#333" stroke-width="0.6" />
<ellipse cx="119.81" cy="429.89" rx="8.4" ry="5.04" transform="rotate(60 119.81 429.89)" fill="#fff" stroke="#333" stroke-width="0.7" />
<ellipse cx="127.85" cy="439.01" rx="0.9" ry="0.54" transform="rotate(60 127.85 439.01)" fill="none" stroke="#333" stroke-width="0.5" />
<ellipse cx="137.07" cy="438.3" rx="8.4" ry="5.04" transform="rotate(60 137.07 438.3)" fill="#fff" stroke="#333" stroke-width="0.6" />
<ellipse cx="136.03" cy="438.9" rx="8.4" ry="5.04" transform="rotate(60 136.03 438.9)" fill="#fff" stroke="#333" stroke-width="0.7" />
<ellipse cx="144.68" cy="440.37" rx="0.9" ry="0.54" transform="rotate(60 144.68 440.37)" fill="none" stroke="#333" stroke-width="0.5" />
<ellipse cx="148.77" cy="431.55" rx="8.4" ry="5.04" transform="rotate(60 148.77 431.55)" fill="#fff" stroke="#333" stroke-width="0.6" />
<ellipse cx="147.73" cy="432.15" rx="8.4" ry="5.04" transform="rotate(60 147.73 432.15)" fill="#fff" stroke="#333" stroke-width="0.7" />
<ellipse cx="151.92" cy="425.11" rx="0.9" ry="0.54" transform="rotate(60 151.92 425.11)" fill="none" stroke="#333" stroke-width="0.5" />
<ellipse cx="128.3" cy="412" rx="16.38" ry="9.83" transform="rotate(60 128.3 412)" fill="#fff" stroke="#333" stroke-width="0.7" />
<ellipse cx="127" cy="412.75" rx="14.7" ry="8.82" transform="rotate(60 127 412.75)" fill="#fff" stroke="#333" stroke-width="0.7" />
<ellipse cx="127" cy="412.75" rx="10.08" ry="6.05" transform="rotate(60 127 412.75)" fill="none" stroke="#444" stroke-width="0.5" />
<ellipse cx="129.5" cy="410.13" rx="2.5" ry="1.5" transform="rotate(60 129.5 410.13)" fill="#fff" stroke="#333" stroke-width="0.6" />
<ellipse cx="122.78" cy="409.98" rx="2.5" ry="1.5" transform="rotate(60 122.78 409.98)" fill="#fff" stroke="#333" stroke-width="0.6" />
<ellipse cx="128.72" cy="418.14" rx="2.5" ry="1.5" transform="rotate(60 128.72 418.14)" fill="#fff" stroke="#333" stroke-width="0.6" />
<ellipse cx="127" cy="412.75" rx="1.6" ry="0.96" transform="rotate(60 127 412.75)" fill="#fff" stroke="#333" stroke-width="0.6" />
<line x1="100" y1="428" x2="122" y2="414" stroke="#666" stroke-width="0.5" stroke-dasharray="9 2 2 2"/>
<polygon points="152.73,379.58 159.28,376.7 158.32,374.5 151.77,377.38" fill="#fff" stroke="#3a3a3a" stroke-width="0.7" stroke-linejoin="round" />
<line x1="155.88" y1="378.19" x2="154.91" y2="376" stroke="#3a3a3a" stroke-width="0.4" />
<line x1="156.73" y1="377.82" x2="155.76" y2="375.62" stroke="#3a3a3a" stroke-width="0.4" />
<line x1="157.58" y1="377.45" x2="156.61" y2="375.25" stroke="#3a3a3a" stroke-width="0.4" />
<line x1="158.43" y1="377.07" x2="157.47" y2="374.88" stroke="#3a3a3a" stroke-width="0.4" />
<polygon points="151.52,381.31 153.17,380.58 151.32,376.37 149.68,377.09" fill="#fff" stroke="#3a3a3a" stroke-width="0.7" stroke-linejoin="round" />
<ellipse cx="150.6" cy="379.2" rx="2.3" ry="1.38" transform="rotate(60 150.6 379.2)" fill="#fff" stroke="#3a3a3a" stroke-width="0.7" />
<ellipse cx="173.69" cy="384.6" rx="16.3" ry="10.43" transform="rotate(60 173.69 384.6)" fill="#fff" stroke="#3a3a3a" stroke-width="0.7" />
<ellipse cx="173" cy="385" rx="16.3" ry="10.43" transform="rotate(60 173 385)" fill="#fff" stroke="#3a3a3a" stroke-width="0.8" />
<ellipse cx="173" cy="385" rx="12.2" ry="7.81" transform="rotate(60 173 385)" fill="#fff" stroke="#3a3a3a" stroke-width="0.7" />
<ellipse cx="177.16" cy="375.62" rx="1" ry="0.64" transform="rotate(60 177.16 375.62)" fill="#fff" stroke="#3a3a3a" stroke-width="0.5" />
<ellipse cx="162.41" cy="381.65" rx="1" ry="0.64" transform="rotate(60 162.41 381.65)" fill="#fff" stroke="#3a3a3a" stroke-width="0.5" />
<ellipse cx="179.43" cy="397.74" rx="1" ry="0.64" transform="rotate(60 179.43 397.74)" fill="#fff" stroke="#3a3a3a" stroke-width="0.5" />
<line x1="165" y1="371.5" x2="181.5" y2="362" stroke="#555" stroke-width="0.5" />
<ellipse cx="196.91" cy="370.9" rx="19" ry="11.78" transform="rotate(60 196.91 370.9)" fill="#555" stroke="#333" stroke-width="0.8" />
<polygon points="204.5,388.45 185.5,355.55 187.41,354.45 206.41,387.35" fill="#555" stroke="none" stroke-width="0.7" stroke-linejoin="round" />
<ellipse cx="195" cy="372" rx="19" ry="11.78" transform="rotate(60 195 372)" fill="#fff" stroke="#3a3a3a" stroke-width="0.8" />
<ellipse cx="195.87" cy="371.5" rx="13" ry="8.06" transform="rotate(60 195.87 371.5)" fill="#fff" stroke="#3a3a3a" stroke-width="0.7" />
<ellipse cx="195" cy="372" rx="13" ry="8.06" transform="rotate(60 195 372)" fill="none" stroke="#3a3a3a" stroke-width="0.7" />
<ellipse cx="198.5" cy="360.57" rx="1" ry="0.62" transform="rotate(60 198.5 360.57)" fill="#fff" stroke="#3a3a3a" stroke-width="0.5" />
<ellipse cx="183.35" cy="369.32" rx="1" ry="0.62" transform="rotate(60 183.35 369.32)" fill="#fff" stroke="#3a3a3a" stroke-width="0.5" />
<ellipse cx="203.15" cy="386.12" rx="1" ry="0.62" transform="rotate(60 203.15 386.12)" fill="#fff" stroke="#3a3a3a" stroke-width="0.5" />
<ellipse cx="217.6" cy="359.4" rx="20.3" ry="11.37" transform="rotate(60 217.6 359.4)" fill="none" stroke="#333" stroke-width="2.0" />
<ellipse cx="217.6" cy="359.4" rx="20.3" ry="11.37" transform="rotate(60 217.6 359.4)" fill="none" stroke="#bbb" stroke-width="0.5" />
<ellipse cx="241" cy="345.8" rx="18.2" ry="10.01" transform="rotate(60 241 345.8)" fill="none" stroke="#333" stroke-width="1.9" />
<ellipse cx="241" cy="345.8" rx="18.2" ry="10.01" transform="rotate(60 241 345.8)" fill="none" stroke="#bbb" stroke-width="0.5" />
<ellipse cx="261.62" cy="332.8" rx="13.7" ry="7.67" transform="rotate(60 261.62 332.8)" fill="#444" stroke="#222" stroke-width="0.8" />
<polygon points="265.35,346.46 251.65,322.74 254.77,320.94 268.47,344.66" fill="#444" stroke="none" stroke-width="0.7" stroke-linejoin="round" />
<ellipse cx="260.06" cy="333.7" rx="13.7" ry="7.67" transform="rotate(60 260.06 333.7)" fill="none" stroke="#ddd" stroke-width="0.5" />
<ellipse cx="258.5" cy="334.6" rx="13.7" ry="7.67" transform="rotate(60 258.5 334.6)" fill="#fff" stroke="#222" stroke-width="0.9" />
<ellipse cx="258.5" cy="334.6" rx="12.2" ry="6.83" transform="rotate(60 258.5 334.6)" fill="none" stroke="#333" stroke-width="0.5" />
<ellipse cx="264.31" cy="339.85" rx="2.2" ry="1.23" transform="rotate(60 264.31 339.85)" fill="#fff" stroke="#333" stroke-width="0.6" />
<ellipse cx="262.67" cy="332.19" rx="2.2" ry="1.23" transform="rotate(60 262.67 332.19)" fill="#fff" stroke="#333" stroke-width="0.6" />
<ellipse cx="256.86" cy="326.95" rx="2.2" ry="1.23" transform="rotate(60 256.86 326.95)" fill="#fff" stroke="#333" stroke-width="0.6" />
<ellipse cx="252.69" cy="329.35" rx="2.2" ry="1.23" transform="rotate(60 252.69 329.35)" fill="#fff" stroke="#333" stroke-width="0.6" />
<ellipse cx="254.33" cy="337.01" rx="2.2" ry="1.23" transform="rotate(60 254.33 337.01)" fill="#fff" stroke="#333" stroke-width="0.6" />
<ellipse cx="260.14" cy="342.25" rx="2.2" ry="1.23" transform="rotate(60 260.14 342.25)" fill="#fff" stroke="#333" stroke-width="0.6" />
<ellipse cx="258.5" cy="334.6" rx="4.2" ry="2.35" transform="rotate(60 258.5 334.6)" fill="#fff" stroke="#333" stroke-width="0.6" />
<ellipse cx="259.37" cy="334.1" rx="3.4" ry="1.9" transform="rotate(60 259.37 334.1)" fill="none" stroke="#555" stroke-width="0.5" />
<rect x="32" y="359" width="5.2" height="7.2" fill="#21d321"/>
<text x="34.6" y="365" font-size="6" text-anchor="middle" fill="#2a2a2a">1</text>
<rect x="11" y="450" width="6" height="8" fill="#ffff00"/>
<text x="14" y="456.8" font-size="6.2" text-anchor="middle" fill="#2a2a2a">7</text>
<rect x="130" y="327" width="6" height="7.2" fill="#ffff00"/>
<text x="133" y="333" font-size="6.2" text-anchor="middle" fill="#2a2a2a">9</text>
<rect x="151.5" y="315.6" width="6.2" height="7" fill="#ffff00"/>
<text x="154.6" y="321.4" font-size="6.2" text-anchor="middle" fill="#2a2a2a">8</text>
<rect x="173.3" y="306.9" width="7.3" height="6.8" fill="#ee6b6b"/>
<text x="176.95" y="312.5" font-size="6.2" text-anchor="middle" fill="#a33">10</text>
<rect x="196.7" y="301.7" width="7.5" height="7.2" fill="#ffff00"/>
<text x="200.45" y="307.7" font-size="6.2" text-anchor="middle" fill="#2a2a2a">11</text>
<rect x="227.1" y="276.3" width="7.6" height="7" fill="#ffff00"/>
<text x="230.9" y="282.1" font-size="6.2" text-anchor="middle" fill="#2a2a2a">12</text>
<rect x="242.1" y="303.1" width="8.6" height="7.2" fill="#ffff00"/>
<text x="246.4" y="309.1" font-size="6.2" text-anchor="middle" fill="#2a2a2a">13</text>
</svg>

</div>
<div id="split"></div>
<div id="right">
<table id="parts" cellspacing="0" cellpadding="0">
<thead><tr><th class="c0"><svg width="17" height="17" viewBox="0 0 17 17"><use href="#search"/></svg></th><th class="c1">Symbol(s)</th><th class="c2">Item</th><th class="c3">Parts No.</th><th class="c4">Qty.</th><th class="c5">Latest Part No.</th><th class="c6">Description</th></tr></thead>
<tbody>
<tr><td class="c0"><svg class="ic g2" width="15" height="14" viewBox="0 0 15 14"><use href="#gear" x="0.300" y="0.100" width="8.400" height="8.400" style="color:#3160dc"/><use href="#gear" x="5.800" y="5.100" width="8.400" height="8.400" style="color:#6cab1f"/></svg><svg class="ic cart" width="17" height="14" viewBox="0 0 17 14"><use href="#cart"/></svg><svg class="ic info" width="15" height="15" viewBox="0 0 15 15"><use href="#info"/></svg></td><td class="c1"></td><td class="c2">1</td><td class="c3">T400235</td><td class="c4">1</td><td class="c5">T400235</td><td class="c6">CAMSHAFT GEAR</td></tr>
<tr><td class="c0"><svg class="ic g1" width="15" height="14" viewBox="0 0 15 14"><use href="#gear" x="1.700" y="1.300" width="10.400" height="10.400" style="color:#70ae22"/></svg><svg class="ic cart" width="17" height="14" viewBox="0 0 17 14"><use href="#cart"/></svg><svg class="ic info" width="15" height="15" viewBox="0 0 15 15"><use href="#info"/></svg></td><td class="c1"></td><td class="c2">7</td><td class="c3">CH10616</td><td class="c4">6</td><td class="c5">CH10616</td><td class="c6">BOLT</td></tr>
<tr><td class="c0"><svg class="ic g1" width="15" height="14" viewBox="0 0 15 14"><use href="#gear" x="1.700" y="1.300" width="10.400" height="10.400" style="color:#70ae22"/></svg><svg class="ic cart" width="17" height="14" viewBox="0 0 17 14"><use href="#cart"/></svg><svg class="ic info" width="15" height="15" viewBox="0 0 15 15"><use href="#info"/></svg></td><td class="c1"></td><td class="c2">8</td><td class="c3">CH10617</td><td class="c4">1</td><td class="c5">CH10617</td><td class="c6">PLATE</td></tr>
<tr><td class="c0"><svg class="ic g1" width="15" height="14" viewBox="0 0 15 14"><use href="#gear" x="1.700" y="1.300" width="10.400" height="10.400" style="color:#70ae22"/></svg><svg class="ic cart" width="17" height="14" viewBox="0 0 17 14"><use href="#cart"/></svg><svg class="ic info" width="15" height="15" viewBox="0 0 15 15"><use href="#info"/></svg></td><td class="c1"></td><td class="c2">9</td><td class="c3">CH10618</td><td class="c4">3</td><td class="c5">CH10618</td><td class="c6">BOLT</td></tr>
<tr class="sel"><td class="c0"><svg class="ic g1" width="15" height="14" viewBox="0 0 15 14"><use href="#gear" x="1.700" y="1.300" width="10.400" height="10.400" style="color:#70ae22"/></svg><svg class="ic cart" width="17" height="14" viewBox="0 0 17 14"><use href="#cart"/></svg><svg class="ic info" width="15" height="15" viewBox="0 0 15 15"><use href="#info"/></svg></td><td class="c1"></td><td class="c2">10</td><td class="c3">CH10625</td><td class="c4">1</td><td class="c5">CH10625</td><td class="c6">GASKET</td></tr>
<tr><td class="c0"><svg class="ic g1" width="15" height="14" viewBox="0 0 15 14"><use href="#gear" x="1.700" y="1.300" width="10.400" height="10.400" style="color:#70ae22"/></svg><svg class="ic cart" width="17" height="14" viewBox="0 0 17 14"><use href="#cart"/></svg><svg class="ic info" width="15" height="15" viewBox="0 0 15 15"><use href="#info"/></svg></td><td class="c1"></td><td class="c2">11</td><td class="c3">CH10620</td><td class="c4">1</td><td class="c5">CH10620</td><td class="c6">SEAL - O RING</td></tr>
<tr><td class="c0"><svg class="ic g1" width="15" height="14" viewBox="0 0 15 14"><use href="#gear" x="1.700" y="1.300" width="10.400" height="10.400" style="color:#70ae22"/></svg><svg class="ic cart" width="17" height="14" viewBox="0 0 17 14"><use href="#cart"/></svg><svg class="ic info" width="15" height="15" viewBox="0 0 15 15"><use href="#info"/></svg></td><td class="c1"></td><td class="c2">12</td><td class="c3">CH10612</td><td class="c4">1</td><td class="c5">CH10612</td><td class="c6">SEAL - O RING</td></tr>
<tr><td class="c0"><svg class="ic g1" width="15" height="14" viewBox="0 0 15 14"><use href="#gear" x="1.700" y="1.300" width="10.400" height="10.400" style="color:#70ae22"/></svg><svg class="ic cart" width="17" height="14" viewBox="0 0 17 14"><use href="#cart"/></svg><svg class="ic info" width="15" height="15" viewBox="0 0 15 15"><use href="#info"/></svg></td><td class="c1"></td><td class="c2">13</td><td class="c3">CH10627</td><td class="c4">1</td><td class="c5">CH10627</td><td class="c6">ADAPTOR</td></tr>
</tbody></table>
<svg id="logo" width="44" height="51" viewBox="0 0 44 51">
<g fill="none" stroke="#0b559e" stroke-width="2.500">
<circle cx="12.700" cy="10.700" r="6.050"/><circle cx="29.300" cy="10.700" r="6.050"/>
<circle cx="12.700" cy="27.900" r="6.050"/><circle cx="29.300" cy="27.900" r="6.050"/>
</g>
<path d="M21,4.700 Q27,13.300 35.600,19.300 Q27,25.300 21,33.900 Q15,25.300 6.400,19.300 Q15,13.300 21,4.700 Z" fill="none" stroke="#0b559e" stroke-width="2.300" stroke-linejoin="miter" stroke-miterlimit="10"/>
<text x="3.200" y="47.900" font-family="Liberation Sans, sans-serif" font-weight="bold" font-size="10.300" fill="#0b559e" letter-spacing="-0.150">Perkins</text>
<text x="39.300" y="43.600" font-family="Liberation Sans, sans-serif" font-size="3" fill="#0b559e">®</text>
</svg>

</div>
</body></html>
